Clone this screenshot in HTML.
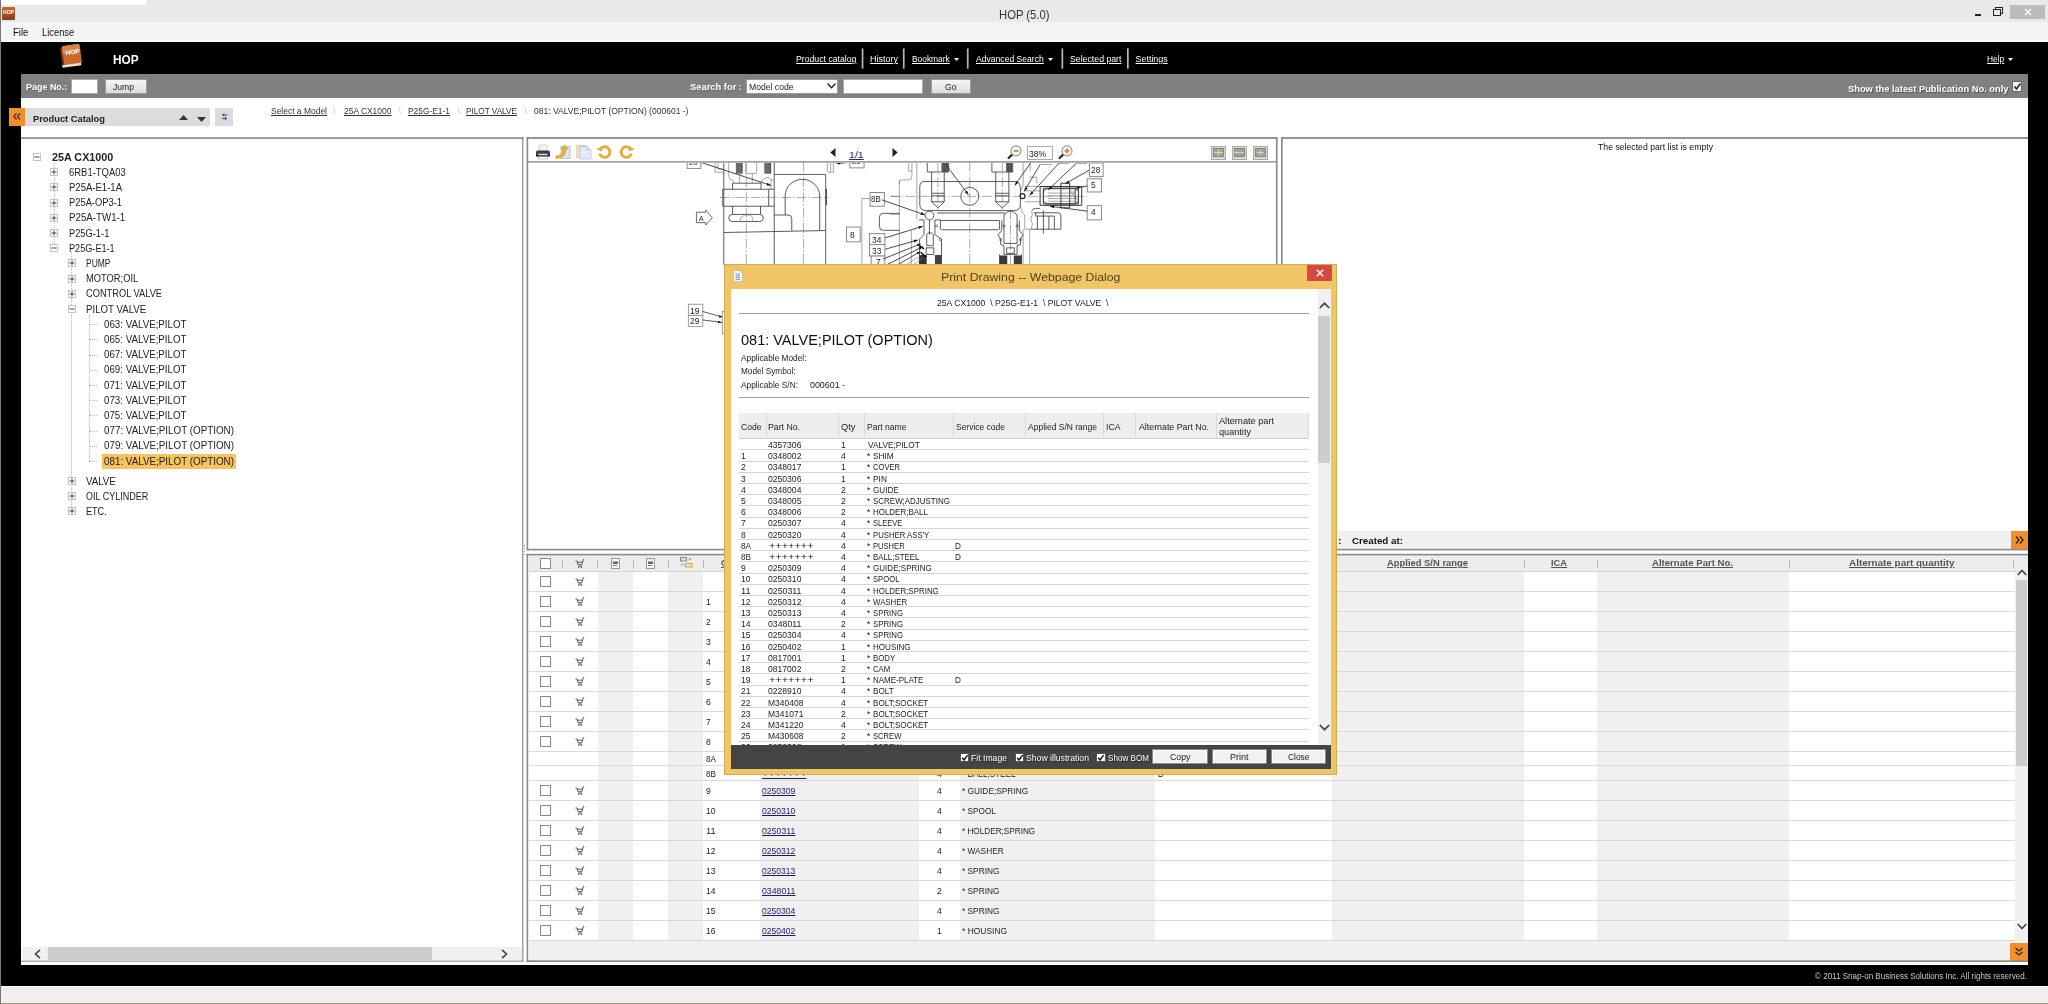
<!DOCTYPE html>
<html><head><meta charset="utf-8"><title>HOP (5.0)</title>
<style>
html,body{margin:0;padding:0;}
body{will-change:transform;width:2048px;height:1004px;position:relative;overflow:hidden;background:#000;font-family:"Liberation Sans",sans-serif;font-size:10px;color:#222;}
div{position:absolute;box-sizing:border-box;}
.t{position:absolute;white-space:nowrap;display:block;transform-origin:0 0;}
svg{position:absolute;overflow:visible;}
</style></head><body>

<div style="left:0px;top:0px;width:2048px;height:23px;background:#e9e9e9;"></div>
<div style="left:0px;top:0px;width:146px;height:5px;background:#fff;"></div>
<div style="left:0px;top:22px;width:2048px;height:1px;background:#f4f4f4;"></div>
<div style="left:0px;top:23px;width:2048px;height:19px;background:#f5f5f5;"></div>
<div style="left:0px;top:41px;width:2048px;height:1.4px;background:#fff;"></div>
<div style="left:0px;top:42px;width:2048px;height:944px;background:#000;"></div>
<div style="left:0px;top:985.5px;width:2048px;height:18px;background:#efefef;"></div>
<div style="left:0px;top:985.5px;width:2048px;height:1.3px;background:#fff;"></div>
<div style="left:0px;top:1003px;width:2048px;height:1px;background:#a89a6c;"></div>
<div style="left:0px;top:0px;width:1px;height:1004px;background:#777;"></div>
<span class="t" style="left:999.3px;top:6px;font-size:13px;line-height:17px;color:#333;transform:scaleX(0.8665);">HOP (5.0)</span>
<div style="left:2px;top:7px;width:13px;height:13px;background:linear-gradient(#c8672a,#8a3c14);border-radius:1px;"></div>
<span class="t" style="left:3px;top:8px;font-size:5px;line-height:8px;color:#fff;transform:scaleX(1.0111);font-weight:bold;">HOP</span>
<div style="left:1974.7px;top:13.7px;width:6.3px;height:2px;background:#222;"></div>
<svg style="left:1993px;top:7px" width="11" height="10"><rect x="2.5" y="0.5" width="7" height="6" fill="none" stroke="#222" stroke-width="1"/><rect x="0.5" y="2.5" width="7" height="6" fill="#e9e9e9" stroke="#222" stroke-width="1"/></svg>
<div style="left:2009.7px;top:5px;width:35.8px;height:14.2px;background:#bcbcbc;"></div>
<svg style="left:2024px;top:8px" width="8" height="8"><path d="M1 1 L7 7 M7 1 L1 7" stroke="#fff" stroke-width="1.4"/></svg>
<span class="t" style="left:12.8px;top:26px;font-size:10px;line-height:13px;color:#111;transform:scaleX(0.9557);">File</span>
<span class="t" style="left:42.3px;top:26px;font-size:10px;line-height:13px;color:#111;transform:scaleX(0.9342);">License</span>
<svg style="left:58px;top:43px" width="26" height="27" viewBox="0 0 26 27"><g transform="rotate(-8 13 13)"><rect x="3" y="3" width="19" height="20" rx="2" fill="#5a2a10"/><rect x="5" y="2" width="18" height="20" rx="2" fill="#c9692b"/><rect x="5" y="2" width="18" height="9" rx="2" fill="#d98345"/><rect x="3" y="21" width="19" height="2.5" fill="#e8e0d0"/></g><text x="8" y="11.5" font-size="6.5" font-weight="bold" fill="#fff" font-family="Liberation Sans, sans-serif" transform="rotate(-8 13 13)">HOP</text></svg>
<span class="t" style="left:112.6px;top:52px;font-size:12px;line-height:16px;color:#fff;transform:scaleX(0.9844);font-weight:bold;">HOP</span>
<span class="t nav" style="left:795.5px;top:53px;font-size:8.9px;line-height:12px;color:#fff;transform:scaleX(0.9799);text-decoration:underline;">Product catalog</span>
<span class="t nav" style="left:869.8px;top:53px;font-size:8.9px;line-height:12px;color:#fff;transform:scaleX(1.0111);text-decoration:underline;">History</span>
<span class="t nav" style="left:911.5px;top:53px;font-size:8.9px;line-height:12px;color:#fff;transform:scaleX(0.9435);text-decoration:underline;">Bookmark</span>
<span class="t nav" style="left:975.8px;top:53px;font-size:8.9px;line-height:12px;color:#fff;transform:scaleX(0.9678);text-decoration:underline;">Advanced Search</span>
<span class="t nav" style="left:1070.3px;top:53px;font-size:8.9px;line-height:12px;color:#fff;transform:scaleX(0.9839);text-decoration:underline;">Selected part</span>
<span class="t nav" style="left:1135.6px;top:53px;font-size:8.9px;line-height:12px;color:#fff;text-decoration:underline;">Settings</span>
<span class="t nav" style="left:1986.5px;top:53px;font-size:8.9px;line-height:12px;color:#fff;transform:scaleX(0.9396);text-decoration:underline;">Help</span>
<svg style="left:953.8px;top:57.5px" width="5" height="3"><path d="M0 0 H5 L2.5 3 Z" fill="#fff"/></svg>
<svg style="left:1047.5px;top:57.5px" width="5" height="3"><path d="M0 0 H5 L2.5 3 Z" fill="#fff"/></svg>
<svg style="left:2008px;top:57.5px" width="5" height="3"><path d="M0 0 H5 L2.5 3 Z" fill="#fff"/></svg>
<div style="left:21px;top:74px;width:2007px;height:24px;background:#808080;"></div>
<span class="t" style="left:26.3px;top:80px;font-size:9.6px;line-height:13px;color:#fff;transform:scaleX(0.9328);font-weight:bold;text-shadow:1px 1px 0 #666;">Page No.:</span>
<div style="left:70.5px;top:78.5px;width:27.5px;height:15.5px;background:#fff;border:1px solid #aaa;"></div>
<div style="left:105px;top:79px;width:41.5px;height:15px;background:linear-gradient(#f6f6f6,#dcdcdc);border:1px solid #9a9a9a;"></div>
<span class="t" style="left:113.3px;top:81px;font-size:9.2px;line-height:12px;color:#222;transform:scaleX(0.9334);">Jump</span>
<span class="t" style="left:689.8px;top:80px;font-size:9.8px;line-height:13px;color:#fff;transform:scaleX(0.9548);font-weight:bold;text-shadow:1px 1px 0 #666;">Search for :</span>
<div style="left:745.7px;top:79px;width:92.5px;height:14.7px;background:#fff;border:1px solid #999;"></div>
<span class="t" style="left:748.8px;top:81px;font-size:9.2px;line-height:12px;color:#222;transform:scaleX(0.9377);">Model code</span>
<svg style="left:827px;top:83px" width="9" height="6"><path d="M0.5 0.5 L4.5 4.8 L8.5 0.5" fill="none" stroke="#222" stroke-width="1.3"/></svg>
<div style="left:843px;top:79px;width:79.5px;height:14.7px;background:#fff;border:1px solid #aaa;"></div>
<div style="left:930.8px;top:79.3px;width:40.5px;height:14.4px;background:linear-gradient(#f6f6f6,#dcdcdc);border:1px solid #9a9a9a;"></div>
<span class="t" style="left:945.3px;top:81px;font-size:9.2px;line-height:12px;color:#222;transform:scaleX(0.937);">Go</span>
<span class="t" style="left:1848.3px;top:82px;font-size:9.5px;line-height:13px;color:#fff;transform:scaleX(0.9809);font-weight:bold;text-shadow:1px 1px 0 #555;">Show the latest Publication No. only</span>
<div style="left:2011.5px;top:81px;width:10.5px;height:10.5px;background:#f4f4f4;border:1px solid #666;"></div>
<svg style="left:2012.5px;top:82px" width="9" height="9"><path d="M1.5 4.5 L3.5 7 L7.5 1.5" fill="none" stroke="#222" stroke-width="1.5"/></svg>
<div style="left:21px;top:98px;width:2007px;height:867px;background:#fff;"></div>
<div style="left:24px;top:108px;width:186px;height:18px;background:#dcdcdc;"></div>
<div style="left:9px;top:108px;width:15.5px;height:18px;background:#f28f2c;"></div>
<svg style="left:13.3px;top:113px" width="8" height="7" viewBox="0 0 9 8"><path d="M4 0.5 L1 4 L4 7.5 M8 0.5 L5 4 L8 7.5" fill="none" stroke="#222" stroke-width="1.3"/></svg>
<span class="t" style="left:32.6px;top:112px;font-size:9.6px;line-height:13px;color:#222;transform:scaleX(0.9711);font-weight:bold;">Product Catalog</span>
<svg style="left:179px;top:115px" width="9" height="5"><path d="M0 5 H9 L4.5 0 Z" fill="#333"/></svg>
<svg style="left:196.5px;top:117px" width="9" height="5"><path d="M0 0 H9 L4.5 5 Z" fill="#333"/></svg>
<div style="left:215px;top:108px;width:18px;height:18px;background:#dcdcdc;"></div>
<svg style="left:220.8px;top:113px" width="7.2" height="8" viewBox="0 0 9 10"><path d="M8 2.5 H2 M2 2.5 L4 0.5 M2 2.5 L4 4.5 M1 7 H7 M7 7 L5 5 M7 7 L5 9" fill="none" stroke="#2a3a8a" stroke-width="1.2"/></svg>
<span class="t bc" style="left:270.6px;top:105px;font-size:8.8px;line-height:12px;color:#333;transform:scaleX(0.962);text-decoration:underline;">Select a Model</span>
<span class="t bc" style="left:343.8px;top:105px;font-size:8.8px;line-height:12px;color:#333;transform:scaleX(0.9591);text-decoration:underline;">25A CX1000</span>
<span class="t bc" style="left:407.8px;top:105px;font-size:8.8px;line-height:12px;color:#333;transform:scaleX(0.954);text-decoration:underline;">P25G-E1-1</span>
<span class="t bc" style="left:466.3px;top:105px;font-size:8.8px;line-height:12px;color:#333;transform:scaleX(0.9309);text-decoration:underline;">PILOT VALVE</span>
<span class="t bc" style="left:533.8px;top:105px;font-size:8.8px;line-height:12px;color:#333;transform:scaleX(0.969);">081: VALVE;PILOT (OPTION) (000601 -)</span>
<span class="t" style="left:333px;top:105px;font-size:8.8px;line-height:12px;color:#d9c88e;letter-spacing:0.917px;">\</span>
<span class="t" style="left:398.5px;top:105px;font-size:8.8px;line-height:12px;color:#d9c88e;letter-spacing:0.917px;">\</span>
<span class="t" style="left:457.5px;top:105px;font-size:8.8px;line-height:12px;color:#d9c88e;letter-spacing:0.917px;">\</span>
<span class="t" style="left:524.5px;top:105px;font-size:8.8px;line-height:12px;color:#d9c88e;letter-spacing:0.917px;">\</span>
<div style="left:524px;top:544.5px;width:1px;height:1.2px;background:#999;"></div>
<div style="left:524px;top:547.5px;width:1px;height:1.2px;background:#999;"></div>
<div style="left:524px;top:550.5px;width:1px;height:1.2px;background:#999;"></div>
<div style="left:524px;top:553.5px;width:1px;height:1.2px;background:#999;"></div>
<div style="left:53.5px;top:163px;width:1px;height:85.19999999999993px;border-left:1px dotted #bbb;"></div>
<div style="left:71.2px;top:252.19999999999993px;width:1px;height:259.1999999999998px;border-left:1px dotted #bbb;"></div>
<div style="left:88.7px;top:314.9999999999999px;width:1px;height:145.9999999999999px;border-left:1px dotted #bbb;"></div>
<svg style="left:32.5px;top:153.0px" width="8" height="8"><rect x="0.5" y="0.5" width="7" height="7" fill="#fff" stroke="#c2c2c2" stroke-width="1"/><path d="M1.5 4 H6.5" stroke="#333" stroke-width="0.9"/></svg>
<span class="t" style="left:51.6px;top:151px;font-size:10px;line-height:13px;color:#222;transform:scaleX(1.0775);font-weight:bold;">25A CX1000</span>
<svg style="left:50px;top:168.2px" width="8" height="8"><rect x="0.5" y="0.5" width="7" height="7" fill="#fff" stroke="#c2c2c2" stroke-width="1"/><path d="M1.5 4 H6.5 M4 1.5 V6.5" stroke="#333" stroke-width="0.9"/></svg>
<span class="t" style="left:68.6px;top:166px;font-size:10px;line-height:13px;color:#222;transform:scaleX(0.9446);">6RB1-TQA03</span>
<svg style="left:50px;top:183.4px" width="8" height="8"><rect x="0.5" y="0.5" width="7" height="7" fill="#fff" stroke="#c2c2c2" stroke-width="1"/><path d="M1.5 4 H6.5 M4 1.5 V6.5" stroke="#333" stroke-width="0.9"/></svg>
<span class="t" style="left:68.6px;top:181px;font-size:10px;line-height:13px;color:#222;transform:scaleX(0.9534);">P25A-E1-1A</span>
<svg style="left:50px;top:198.6px" width="8" height="8"><rect x="0.5" y="0.5" width="7" height="7" fill="#fff" stroke="#c2c2c2" stroke-width="1"/><path d="M1.5 4 H6.5 M4 1.5 V6.5" stroke="#333" stroke-width="0.9"/></svg>
<span class="t" style="left:68.6px;top:196px;font-size:10px;line-height:13px;color:#222;transform:scaleX(0.9348);">P25A-OP3-1</span>
<svg style="left:50px;top:213.8px" width="8" height="8"><rect x="0.5" y="0.5" width="7" height="7" fill="#fff" stroke="#c2c2c2" stroke-width="1"/><path d="M1.5 4 H6.5 M4 1.5 V6.5" stroke="#333" stroke-width="0.9"/></svg>
<span class="t" style="left:68.6px;top:211px;font-size:10px;line-height:13px;color:#222;transform:scaleX(0.9724);">P25A-TW1-1</span>
<svg style="left:50px;top:229.0px" width="8" height="8"><rect x="0.5" y="0.5" width="7" height="7" fill="#fff" stroke="#c2c2c2" stroke-width="1"/><path d="M1.5 4 H6.5 M4 1.5 V6.5" stroke="#333" stroke-width="0.9"/></svg>
<span class="t" style="left:68.6px;top:227px;font-size:10px;line-height:13px;color:#222;transform:scaleX(0.9295);">P25G-1-1</span>
<svg style="left:50px;top:244.2px" width="8" height="8"><rect x="0.5" y="0.5" width="7" height="7" fill="#fff" stroke="#c2c2c2" stroke-width="1"/><path d="M1.5 4 H6.5" stroke="#333" stroke-width="0.9"/></svg>
<span class="t" style="left:68.6px;top:242px;font-size:10px;line-height:13px;color:#222;transform:scaleX(0.9135);">P25G-E1-1</span>
<svg style="left:67.7px;top:259.4px" width="8" height="8"><rect x="0.5" y="0.5" width="7" height="7" fill="#fff" stroke="#c2c2c2" stroke-width="1"/><path d="M1.5 4 H6.5 M4 1.5 V6.5" stroke="#333" stroke-width="0.9"/></svg>
<span class="t" style="left:86.3px;top:257px;font-size:10px;line-height:13px;color:#222;transform:scaleX(0.848);">PUMP</span>
<svg style="left:67.7px;top:274.6px" width="8" height="8"><rect x="0.5" y="0.5" width="7" height="7" fill="#fff" stroke="#c2c2c2" stroke-width="1"/><path d="M1.5 4 H6.5 M4 1.5 V6.5" stroke="#333" stroke-width="0.9"/></svg>
<span class="t" style="left:86.3px;top:272px;font-size:10px;line-height:13px;color:#222;transform:scaleX(0.9333);">MOTOR;OIL</span>
<svg style="left:67.7px;top:289.8px" width="8" height="8"><rect x="0.5" y="0.5" width="7" height="7" fill="#fff" stroke="#c2c2c2" stroke-width="1"/><path d="M1.5 4 H6.5 M4 1.5 V6.5" stroke="#333" stroke-width="0.9"/></svg>
<span class="t" style="left:86.3px;top:287px;font-size:10px;line-height:13px;color:#222;transform:scaleX(0.9262);">CONTROL VALVE</span>
<svg style="left:67.7px;top:305.0px" width="8" height="8"><rect x="0.5" y="0.5" width="7" height="7" fill="#fff" stroke="#c2c2c2" stroke-width="1"/><path d="M1.5 4 H6.5" stroke="#333" stroke-width="0.9"/></svg>
<span class="t" style="left:86.3px;top:303px;font-size:10px;line-height:13px;color:#222;transform:scaleX(0.967);">PILOT VALVE</span>
<div style="left:89px;top:324.2px;width:7.5px;height:1px;border-top:1px dotted #bbb;"></div>
<span class="t" style="left:104.3px;top:318px;font-size:10px;line-height:13px;color:#222;transform:scaleX(0.9743);">063: VALVE;PILOT</span>
<div style="left:89px;top:339.4px;width:7.5px;height:1px;border-top:1px dotted #bbb;"></div>
<span class="t" style="left:104.3px;top:333px;font-size:10px;line-height:13px;color:#222;transform:scaleX(0.9743);">065: VALVE;PILOT</span>
<div style="left:89px;top:354.6px;width:7.5px;height:1px;border-top:1px dotted #bbb;"></div>
<span class="t" style="left:104.3px;top:348px;font-size:10px;line-height:13px;color:#222;transform:scaleX(0.9743);">067: VALVE;PILOT</span>
<div style="left:89px;top:369.8px;width:7.5px;height:1px;border-top:1px dotted #bbb;"></div>
<span class="t" style="left:104.3px;top:363px;font-size:10px;line-height:13px;color:#222;transform:scaleX(0.9743);">069: VALVE;PILOT</span>
<div style="left:89px;top:385.0px;width:7.5px;height:1px;border-top:1px dotted #bbb;"></div>
<span class="t" style="left:104.3px;top:379px;font-size:10px;line-height:13px;color:#222;transform:scaleX(0.9743);">071: VALVE;PILOT</span>
<div style="left:89px;top:400.2px;width:7.5px;height:1px;border-top:1px dotted #bbb;"></div>
<span class="t" style="left:104.3px;top:394px;font-size:10px;line-height:13px;color:#222;transform:scaleX(0.9743);">073: VALVE;PILOT</span>
<div style="left:89px;top:415.4px;width:7.5px;height:1px;border-top:1px dotted #bbb;"></div>
<span class="t" style="left:104.3px;top:409px;font-size:10px;line-height:13px;color:#222;transform:scaleX(0.9743);">075: VALVE;PILOT</span>
<div style="left:89px;top:430.6px;width:7.5px;height:1px;border-top:1px dotted #bbb;"></div>
<span class="t" style="left:104.3px;top:424px;font-size:10px;line-height:13px;color:#222;transform:scaleX(0.9828);">077: VALVE;PILOT (OPTION)</span>
<div style="left:89px;top:445.8px;width:7.5px;height:1px;border-top:1px dotted #bbb;"></div>
<span class="t" style="left:104.3px;top:439px;font-size:10px;line-height:13px;color:#222;transform:scaleX(0.9828);">079: VALVE;PILOT (OPTION)</span>
<div style="left:102.4px;top:454px;width:133.6px;height:14.5px;background:#f6c35f;"></div>
<div style="left:89px;top:461.0px;width:7.5px;height:1px;border-top:1px dotted #bbb;"></div>
<span class="t" style="left:104.3px;top:455px;font-size:10px;line-height:13px;color:#222;transform:scaleX(0.9828);">081: VALVE;PILOT (OPTION)</span>
<svg style="left:67.7px;top:477.0px" width="8" height="8"><rect x="0.5" y="0.5" width="7" height="7" fill="#fff" stroke="#c2c2c2" stroke-width="1"/><path d="M1.5 4 H6.5 M4 1.5 V6.5" stroke="#333" stroke-width="0.9"/></svg>
<span class="t" style="left:86.3px;top:475px;font-size:10px;line-height:13px;color:#222;transform:scaleX(0.9688);">VALVE</span>
<svg style="left:67.7px;top:492.2px" width="8" height="8"><rect x="0.5" y="0.5" width="7" height="7" fill="#fff" stroke="#c2c2c2" stroke-width="1"/><path d="M1.5 4 H6.5 M4 1.5 V6.5" stroke="#333" stroke-width="0.9"/></svg>
<span class="t" style="left:86.3px;top:490px;font-size:10px;line-height:13px;color:#222;transform:scaleX(0.9031);">OIL CYLINDER</span>
<svg style="left:67.7px;top:507.4px" width="8" height="8"><rect x="0.5" y="0.5" width="7" height="7" fill="#fff" stroke="#c2c2c2" stroke-width="1"/><path d="M1.5 4 H6.5 M4 1.5 V6.5" stroke="#333" stroke-width="0.9"/></svg>
<span class="t" style="left:86.3px;top:505px;font-size:10px;line-height:13px;color:#222;transform:scaleX(0.9087);">ETC.</span>
<div style="left:22px;top:946.5px;width:500px;height:13.5px;background:#f0f0f0;"></div>
<div style="left:48px;top:947px;width:384px;height:12.5px;background:#cdcdcd;"></div>
<svg style="left:34px;top:948.5px" width="7" height="10"><path d="M6 0.8 L1.5 5 L6 9.2" fill="none" stroke="#444" stroke-width="1.6"/></svg>
<svg style="left:501px;top:948.5px" width="7" height="10"><path d="M1 0.8 L5.5 5 L1 9.2" fill="none" stroke="#444" stroke-width="1.6"/></svg>
<div style="left:1283px;top:531px;width:745px;height:18px;background:#f0f0f0;"></div>
<span class="t" style="left:1337.6px;top:534px;font-size:9.7px;line-height:13px;color:#111;transform:scaleX(1.0899);font-weight:bold;">:</span>
<span class="t" style="left:1351.7px;top:534px;font-size:9.7px;line-height:13px;color:#111;transform:scaleX(1.0065);font-weight:bold;">Created at:</span>
<div style="left:2010.5px;top:531px;width:17.5px;height:18px;background:#f28f2c;"></div>
<svg style="left:2015px;top:536px" width="9" height="8"><path d="M1 0.5 L4 4 L1 7.5 M5 0.5 L8 4 L5 7.5" fill="none" stroke="#222" stroke-width="1.2"/></svg>
<span class="t" style="left:1598px;top:141px;font-size:9px;line-height:12px;color:#111;transform:scaleX(0.966);">The selected part list is empty</span>
<div style="left:524px;top:128px;width:1px;height:1px;"></div>
<div style="left:526.5px;top:553.8px;width:1501.5px;height:408.2px;background:#fff;"></div>
<div style="left:529px;top:555.8px;width:1499px;height:15.7px;background:#ececec;"></div>
<div style="left:528.5px;top:571px;width:1499.5px;height:1px;background:#d4d4d4;"></div>
<div style="left:597.5px;top:571.5px;width:35.5px;height:369.0px;background:#f0f0f0;"></div>
<div style="left:668px;top:571.5px;width:35px;height:369.0px;background:#f0f0f0;"></div>
<div style="left:760px;top:571.5px;width:159.29999999999995px;height:369.0px;background:#f0f0f0;"></div>
<div style="left:959.5px;top:571.5px;width:195.5px;height:369.0px;background:#f0f0f0;"></div>
<div style="left:1332px;top:571.5px;width:192px;height:369.0px;background:#f0f0f0;"></div>
<div style="left:1597px;top:571.5px;width:192px;height:369.0px;background:#f0f0f0;"></div>
<div style="left:528.5px;top:590.8px;width:1486.5px;height:1px;background:#dadada;"></div>
<div style="left:528.5px;top:610.8px;width:1486.5px;height:1px;background:#dadada;"></div>
<div style="left:528.5px;top:630.8px;width:1486.5px;height:1px;background:#dadada;"></div>
<div style="left:528.5px;top:650.8px;width:1486.5px;height:1px;background:#dadada;"></div>
<div style="left:528.5px;top:670.8px;width:1486.5px;height:1px;background:#dadada;"></div>
<div style="left:528.5px;top:690.8px;width:1486.5px;height:1px;background:#dadada;"></div>
<div style="left:528.5px;top:710.8px;width:1486.5px;height:1px;background:#dadada;"></div>
<div style="left:528.5px;top:730.8px;width:1486.5px;height:1px;background:#dadada;"></div>
<div style="left:528.5px;top:750.8px;width:1486.5px;height:1px;background:#dadada;"></div>
<div style="left:528.5px;top:765.3px;width:1486.5px;height:1px;background:#dadada;"></div>
<div style="left:528.5px;top:779.8px;width:1486.5px;height:1px;background:#dadada;"></div>
<div style="left:528.5px;top:799.8px;width:1486.5px;height:1px;background:#dadada;"></div>
<div style="left:528.5px;top:819.8px;width:1486.5px;height:1px;background:#dadada;"></div>
<div style="left:528.5px;top:839.8px;width:1486.5px;height:1px;background:#dadada;"></div>
<div style="left:528.5px;top:859.8px;width:1486.5px;height:1px;background:#dadada;"></div>
<div style="left:528.5px;top:879.8px;width:1486.5px;height:1px;background:#dadada;"></div>
<div style="left:528.5px;top:899.8px;width:1486.5px;height:1px;background:#dadada;"></div>
<div style="left:528.5px;top:919.8px;width:1486.5px;height:1px;background:#dadada;"></div>
<div style="left:528.5px;top:939.8px;width:1486.5px;height:1px;background:#dadada;"></div>
<div style="left:528.5px;top:940.5px;width:1499.5px;height:20px;background:#f0f0f0;"></div>
<div style="left:561.5px;top:559.5px;width:1px;height:8px;background:#b8b8b8;"></div>
<div style="left:597.0px;top:559.5px;width:1px;height:8px;background:#b8b8b8;"></div>
<div style="left:632.5px;top:559.5px;width:1px;height:8px;background:#b8b8b8;"></div>
<div style="left:667.5px;top:559.5px;width:1px;height:8px;background:#b8b8b8;"></div>
<div style="left:702.5px;top:559.5px;width:1px;height:8px;background:#b8b8b8;"></div>
<div style="left:1331.5px;top:559.5px;width:1px;height:8px;background:#b8b8b8;"></div>
<div style="left:1523.5px;top:559.5px;width:1px;height:8px;background:#b8b8b8;"></div>
<div style="left:1596.5px;top:559.5px;width:1px;height:8px;background:#b8b8b8;"></div>
<div style="left:1788.5px;top:559.5px;width:1px;height:8px;background:#b8b8b8;"></div>
<div style="left:2012.5px;top:559.5px;width:1px;height:8px;background:#b8b8b8;"></div>
<div style="left:540px;top:558px;width:11px;height:11px;background:#fff;border:1px solid #8a8a8a;"></div>
<svg style="left:574.8px;top:558.6px" width="9.4" height="9.6" viewBox="0 0 11 11"><path d="M0.5 2.2 H2.2 L3.6 6.6 H8 L9.6 0.6 H10.8 M2.6 3.6 H8.6 M3.9 8.2 H8.3" fill="none" stroke="#555" stroke-width="1.15"/><circle cx="4.4" cy="9.6" r="0.9" fill="#555"/><circle cx="7.7" cy="9.6" r="0.9" fill="#555"/></svg>
<svg style="left:610.5px;top:557.5px" width="9" height="11"><rect x="0.5" y="0.5" width="8" height="10" fill="#f4f4f4" stroke="#999"/><rect x="2" y="3.5" width="5" height="2.5" fill="#666"/><path d="M2 7.5 H6" stroke="#777"/></svg>
<svg style="left:646px;top:557.5px" width="9" height="11"><rect x="0.5" y="0.5" width="8" height="10" fill="#f4f4f4" stroke="#999"/><rect x="2" y="3.5" width="5" height="2.5" fill="#666"/><path d="M2 7.5 H6" stroke="#777"/></svg>
<svg style="left:680px;top:557px" width="13" height="11"><rect x="0.5" y="0.5" width="6" height="3.5" fill="#ddd" stroke="#888"/><path d="M8.5 1.5 h3 l-1.5 2 z" fill="#888"/><rect x="5.5" y="6.5" width="6.5" height="3.5" fill="#fde9b0" stroke="#e0a030"/><path d="M1 8.5 l1.5 -2 l1.5 2" fill="none" stroke="#999"/></svg>
<span class="t" style="left:720.5px;top:556px;font-size:9.5px;line-height:13px;color:#555;transform:scaleX(0.9263);font-weight:bold;text-decoration:underline;">Code</span>
<span class="t" style="left:820.5px;top:556px;font-size:9.5px;line-height:13px;color:#555;transform:scaleX(1.0433);font-weight:bold;text-decoration:underline;">Part No.</span>
<span class="t" style="left:931.9px;top:556px;font-size:9.5px;line-height:13px;color:#555;transform:scaleX(0.9472);font-weight:bold;text-decoration:underline;">Qty</span>
<span class="t" style="left:1033.5px;top:556px;font-size:9.5px;line-height:13px;color:#555;transform:scaleX(1.0231);font-weight:bold;text-decoration:underline;">Part name</span>
<span class="t" style="left:1213.5px;top:556px;font-size:9.5px;line-height:13px;color:#555;transform:scaleX(1.0235);font-weight:bold;text-decoration:underline;">Service code</span>
<span class="t" style="left:1386.7px;top:556px;font-size:9.5px;line-height:13px;color:#555;transform:scaleX(0.99);font-weight:bold;text-decoration:underline;">Applied S/N range</span>
<span class="t" style="left:1551.3px;top:556px;font-size:9.5px;line-height:13px;color:#555;transform:scaleX(0.9779);font-weight:bold;text-decoration:underline;">ICA</span>
<span class="t" style="left:1651.8px;top:556px;font-size:9.5px;line-height:13px;color:#555;transform:scaleX(1.0095);font-weight:bold;text-decoration:underline;">Alternate Part No.</span>
<span class="t" style="left:1848.5px;top:556px;font-size:9.5px;line-height:13px;color:#555;transform:scaleX(1.041);font-weight:bold;text-decoration:underline;">Alternate part quantity</span>
<div style="left:540px;top:576.2px;width:11px;height:11px;background:#fff;border:1px solid #8a8a8a;"></div>
<svg style="left:574.8px;top:576.9px" width="9.4" height="9.6" viewBox="0 0 11 11"><path d="M0.5 2.2 H2.2 L3.6 6.6 H8 L9.6 0.6 H10.8 M2.6 3.6 H8.6 M3.9 8.2 H8.3" fill="none" stroke="#555" stroke-width="1.15"/><circle cx="4.4" cy="9.6" r="0.9" fill="#555"/><circle cx="7.7" cy="9.6" r="0.9" fill="#555"/></svg>
<span class="t" style="left:761.7px;top:576px;font-size:9.2px;line-height:12px;color:#1c1c64;transform:scaleX(0.9326);text-decoration:underline;">4357306</span>
<span class="t" style="left:937px;top:576px;font-size:9.2px;line-height:12px;color:#222;transform:scaleX(0.9326);">1</span>
<span class="t" style="left:962px;top:576px;font-size:9.2px;line-height:12px;color:#222;transform:scaleX(0.9009);">VALVE;PILOT</span>
<div style="left:540px;top:596.2px;width:11px;height:11px;background:#fff;border:1px solid #8a8a8a;"></div>
<svg style="left:574.8px;top:596.9px" width="9.4" height="9.6" viewBox="0 0 11 11"><path d="M0.5 2.2 H2.2 L3.6 6.6 H8 L9.6 0.6 H10.8 M2.6 3.6 H8.6 M3.9 8.2 H8.3" fill="none" stroke="#555" stroke-width="1.15"/><circle cx="4.4" cy="9.6" r="0.9" fill="#555"/><circle cx="7.7" cy="9.6" r="0.9" fill="#555"/></svg>
<span class="t" style="left:706px;top:596px;font-size:9.2px;line-height:12px;color:#222;transform:scaleX(0.9326);">1</span>
<span class="t" style="left:761.7px;top:596px;font-size:9.2px;line-height:12px;color:#1c1c64;transform:scaleX(0.9326);text-decoration:underline;">0348002</span>
<span class="t" style="left:937px;top:596px;font-size:9.2px;line-height:12px;color:#222;transform:scaleX(0.9326);">4</span>
<span class="t" style="left:962px;top:596px;font-size:9.2px;line-height:12px;color:#222;transform:scaleX(0.9704);">* SHIM</span>
<div style="left:540px;top:616.2px;width:11px;height:11px;background:#fff;border:1px solid #8a8a8a;"></div>
<svg style="left:574.8px;top:616.9px" width="9.4" height="9.6" viewBox="0 0 11 11"><path d="M0.5 2.2 H2.2 L3.6 6.6 H8 L9.6 0.6 H10.8 M2.6 3.6 H8.6 M3.9 8.2 H8.3" fill="none" stroke="#555" stroke-width="1.15"/><circle cx="4.4" cy="9.6" r="0.9" fill="#555"/><circle cx="7.7" cy="9.6" r="0.9" fill="#555"/></svg>
<span class="t" style="left:706px;top:616px;font-size:9.2px;line-height:12px;color:#222;transform:scaleX(0.9326);">2</span>
<span class="t" style="left:761.7px;top:616px;font-size:9.2px;line-height:12px;color:#1c1c64;transform:scaleX(0.9326);text-decoration:underline;">0348017</span>
<span class="t" style="left:937px;top:616px;font-size:9.2px;line-height:12px;color:#222;transform:scaleX(0.9326);">1</span>
<span class="t" style="left:962px;top:616px;font-size:9.2px;line-height:12px;color:#222;transform:scaleX(0.8879);">* COVER</span>
<div style="left:540px;top:636.2px;width:11px;height:11px;background:#fff;border:1px solid #8a8a8a;"></div>
<svg style="left:574.8px;top:636.9px" width="9.4" height="9.6" viewBox="0 0 11 11"><path d="M0.5 2.2 H2.2 L3.6 6.6 H8 L9.6 0.6 H10.8 M2.6 3.6 H8.6 M3.9 8.2 H8.3" fill="none" stroke="#555" stroke-width="1.15"/><circle cx="4.4" cy="9.6" r="0.9" fill="#555"/><circle cx="7.7" cy="9.6" r="0.9" fill="#555"/></svg>
<span class="t" style="left:706px;top:636px;font-size:9.2px;line-height:12px;color:#222;transform:scaleX(0.9326);">3</span>
<span class="t" style="left:761.7px;top:636px;font-size:9.2px;line-height:12px;color:#1c1c64;transform:scaleX(0.9326);text-decoration:underline;">0250306</span>
<span class="t" style="left:937px;top:636px;font-size:9.2px;line-height:12px;color:#222;transform:scaleX(0.9326);">1</span>
<span class="t" style="left:962px;top:636px;font-size:9.2px;line-height:12px;color:#222;">* PIN</span>
<div style="left:540px;top:656.2px;width:11px;height:11px;background:#fff;border:1px solid #8a8a8a;"></div>
<svg style="left:574.8px;top:656.9px" width="9.4" height="9.6" viewBox="0 0 11 11"><path d="M0.5 2.2 H2.2 L3.6 6.6 H8 L9.6 0.6 H10.8 M2.6 3.6 H8.6 M3.9 8.2 H8.3" fill="none" stroke="#555" stroke-width="1.15"/><circle cx="4.4" cy="9.6" r="0.9" fill="#555"/><circle cx="7.7" cy="9.6" r="0.9" fill="#555"/></svg>
<span class="t" style="left:706px;top:656px;font-size:9.2px;line-height:12px;color:#222;transform:scaleX(0.9326);">4</span>
<span class="t" style="left:761.7px;top:656px;font-size:9.2px;line-height:12px;color:#1c1c64;transform:scaleX(0.9326);text-decoration:underline;">0348004</span>
<span class="t" style="left:937px;top:656px;font-size:9.2px;line-height:12px;color:#222;transform:scaleX(0.9326);">2</span>
<span class="t" style="left:962px;top:656px;font-size:9.2px;line-height:12px;color:#222;transform:scaleX(0.9401);">* GUIDE</span>
<div style="left:540px;top:676.2px;width:11px;height:11px;background:#fff;border:1px solid #8a8a8a;"></div>
<svg style="left:574.8px;top:676.9px" width="9.4" height="9.6" viewBox="0 0 11 11"><path d="M0.5 2.2 H2.2 L3.6 6.6 H8 L9.6 0.6 H10.8 M2.6 3.6 H8.6 M3.9 8.2 H8.3" fill="none" stroke="#555" stroke-width="1.15"/><circle cx="4.4" cy="9.6" r="0.9" fill="#555"/><circle cx="7.7" cy="9.6" r="0.9" fill="#555"/></svg>
<span class="t" style="left:706px;top:676px;font-size:9.2px;line-height:12px;color:#222;transform:scaleX(0.9326);">5</span>
<span class="t" style="left:761.7px;top:676px;font-size:9.2px;line-height:12px;color:#1c1c64;transform:scaleX(0.9326);text-decoration:underline;">0348005</span>
<span class="t" style="left:937px;top:676px;font-size:9.2px;line-height:12px;color:#222;transform:scaleX(0.9326);">2</span>
<span class="t" style="left:962px;top:676px;font-size:9.2px;line-height:12px;color:#222;transform:scaleX(0.889);">* SCREW;ADJUSTING</span>
<div style="left:540px;top:696.2px;width:11px;height:11px;background:#fff;border:1px solid #8a8a8a;"></div>
<svg style="left:574.8px;top:696.9px" width="9.4" height="9.6" viewBox="0 0 11 11"><path d="M0.5 2.2 H2.2 L3.6 6.6 H8 L9.6 0.6 H10.8 M2.6 3.6 H8.6 M3.9 8.2 H8.3" fill="none" stroke="#555" stroke-width="1.15"/><circle cx="4.4" cy="9.6" r="0.9" fill="#555"/><circle cx="7.7" cy="9.6" r="0.9" fill="#555"/></svg>
<span class="t" style="left:706px;top:696px;font-size:9.2px;line-height:12px;color:#222;transform:scaleX(0.9326);">6</span>
<span class="t" style="left:761.7px;top:696px;font-size:9.2px;line-height:12px;color:#1c1c64;transform:scaleX(0.9326);text-decoration:underline;">0348006</span>
<span class="t" style="left:937px;top:696px;font-size:9.2px;line-height:12px;color:#222;transform:scaleX(0.9326);">2</span>
<span class="t" style="left:962px;top:696px;font-size:9.2px;line-height:12px;color:#222;transform:scaleX(0.8972);">* HOLDER;BALL</span>
<div style="left:540px;top:716.2px;width:11px;height:11px;background:#fff;border:1px solid #8a8a8a;"></div>
<svg style="left:574.8px;top:716.9px" width="9.4" height="9.6" viewBox="0 0 11 11"><path d="M0.5 2.2 H2.2 L3.6 6.6 H8 L9.6 0.6 H10.8 M2.6 3.6 H8.6 M3.9 8.2 H8.3" fill="none" stroke="#555" stroke-width="1.15"/><circle cx="4.4" cy="9.6" r="0.9" fill="#555"/><circle cx="7.7" cy="9.6" r="0.9" fill="#555"/></svg>
<span class="t" style="left:706px;top:716px;font-size:9.2px;line-height:12px;color:#222;transform:scaleX(0.9326);">7</span>
<span class="t" style="left:761.7px;top:716px;font-size:9.2px;line-height:12px;color:#1c1c64;transform:scaleX(0.9326);text-decoration:underline;">0250307</span>
<span class="t" style="left:937px;top:716px;font-size:9.2px;line-height:12px;color:#222;transform:scaleX(0.9326);">4</span>
<span class="t" style="left:962px;top:716px;font-size:9.2px;line-height:12px;color:#222;transform:scaleX(0.8741);">* SLEEVE</span>
<div style="left:540px;top:736.2px;width:11px;height:11px;background:#fff;border:1px solid #8a8a8a;"></div>
<svg style="left:574.8px;top:736.9px" width="9.4" height="9.6" viewBox="0 0 11 11"><path d="M0.5 2.2 H2.2 L3.6 6.6 H8 L9.6 0.6 H10.8 M2.6 3.6 H8.6 M3.9 8.2 H8.3" fill="none" stroke="#555" stroke-width="1.15"/><circle cx="4.4" cy="9.6" r="0.9" fill="#555"/><circle cx="7.7" cy="9.6" r="0.9" fill="#555"/></svg>
<span class="t" style="left:706px;top:736px;font-size:9.2px;line-height:12px;color:#222;transform:scaleX(0.9326);">8</span>
<span class="t" style="left:761.7px;top:736px;font-size:9.2px;line-height:12px;color:#1c1c64;transform:scaleX(0.9326);text-decoration:underline;">0250320</span>
<span class="t" style="left:937px;top:736px;font-size:9.2px;line-height:12px;color:#222;transform:scaleX(0.9326);">4</span>
<span class="t" style="left:962px;top:736px;font-size:9.2px;line-height:12px;color:#222;transform:scaleX(0.8753);">* PUSHER ASS&#x27;Y</span>
<span class="t" style="left:706px;top:753px;font-size:9.2px;line-height:12px;color:#222;transform:scaleX(0.89);">8A</span>
<span class="t" style="left:761.7px;top:753px;font-size:9.2px;line-height:12px;color:#1c1c64;transform:scaleX(1.1843);text-decoration:underline;">+++++++</span>
<span class="t" style="left:937px;top:753px;font-size:9.2px;line-height:12px;color:#222;transform:scaleX(0.9326);">4</span>
<span class="t" style="left:962px;top:753px;font-size:9.2px;line-height:12px;color:#222;transform:scaleX(0.8803);">* PUSHER</span>
<span class="t" style="left:706px;top:768px;font-size:9.2px;line-height:12px;color:#222;transform:scaleX(0.8815);">8B</span>
<span class="t" style="left:761.7px;top:768px;font-size:9.2px;line-height:12px;color:#1c1c64;transform:scaleX(1.1843);text-decoration:underline;">+++++++</span>
<span class="t" style="left:937px;top:768px;font-size:9.2px;line-height:12px;color:#222;transform:scaleX(0.9326);">4</span>
<span class="t" style="left:962px;top:768px;font-size:9.2px;line-height:12px;color:#222;transform:scaleX(0.892);">* BALL;STEEL</span>
<div style="left:540px;top:785.2px;width:11px;height:11px;background:#fff;border:1px solid #8a8a8a;"></div>
<svg style="left:574.8px;top:785.9px" width="9.4" height="9.6" viewBox="0 0 11 11"><path d="M0.5 2.2 H2.2 L3.6 6.6 H8 L9.6 0.6 H10.8 M2.6 3.6 H8.6 M3.9 8.2 H8.3" fill="none" stroke="#555" stroke-width="1.15"/><circle cx="4.4" cy="9.6" r="0.9" fill="#555"/><circle cx="7.7" cy="9.6" r="0.9" fill="#555"/></svg>
<span class="t" style="left:706px;top:785px;font-size:9.2px;line-height:12px;color:#222;transform:scaleX(0.9326);">9</span>
<span class="t" style="left:761.7px;top:785px;font-size:9.2px;line-height:12px;color:#1c1c64;transform:scaleX(0.9326);text-decoration:underline;">0250309</span>
<span class="t" style="left:937px;top:785px;font-size:9.2px;line-height:12px;color:#222;transform:scaleX(0.9326);">4</span>
<span class="t" style="left:962px;top:785px;font-size:9.2px;line-height:12px;color:#222;transform:scaleX(0.9067);">* GUIDE;SPRING</span>
<div style="left:540px;top:805.2px;width:11px;height:11px;background:#fff;border:1px solid #8a8a8a;"></div>
<svg style="left:574.8px;top:805.9px" width="9.4" height="9.6" viewBox="0 0 11 11"><path d="M0.5 2.2 H2.2 L3.6 6.6 H8 L9.6 0.6 H10.8 M2.6 3.6 H8.6 M3.9 8.2 H8.3" fill="none" stroke="#555" stroke-width="1.15"/><circle cx="4.4" cy="9.6" r="0.9" fill="#555"/><circle cx="7.7" cy="9.6" r="0.9" fill="#555"/></svg>
<span class="t" style="left:706px;top:805px;font-size:9.2px;line-height:12px;color:#222;transform:scaleX(0.9326);">10</span>
<span class="t" style="left:761.7px;top:805px;font-size:9.2px;line-height:12px;color:#1c1c64;transform:scaleX(0.9326);text-decoration:underline;">0250310</span>
<span class="t" style="left:937px;top:805px;font-size:9.2px;line-height:12px;color:#222;transform:scaleX(0.9326);">4</span>
<span class="t" style="left:962px;top:805px;font-size:9.2px;line-height:12px;color:#222;transform:scaleX(0.8965);">* SPOOL</span>
<div style="left:540px;top:825.2px;width:11px;height:11px;background:#fff;border:1px solid #8a8a8a;"></div>
<svg style="left:574.8px;top:825.9px" width="9.4" height="9.6" viewBox="0 0 11 11"><path d="M0.5 2.2 H2.2 L3.6 6.6 H8 L9.6 0.6 H10.8 M2.6 3.6 H8.6 M3.9 8.2 H8.3" fill="none" stroke="#555" stroke-width="1.15"/><circle cx="4.4" cy="9.6" r="0.9" fill="#555"/><circle cx="7.7" cy="9.6" r="0.9" fill="#555"/></svg>
<span class="t" style="left:706px;top:825px;font-size:9.2px;line-height:12px;color:#222;">11</span>
<span class="t" style="left:761.7px;top:825px;font-size:9.2px;line-height:12px;color:#1c1c64;transform:scaleX(0.9508);text-decoration:underline;">0250311</span>
<span class="t" style="left:937px;top:825px;font-size:9.2px;line-height:12px;color:#222;transform:scaleX(0.9326);">4</span>
<span class="t" style="left:962px;top:825px;font-size:9.2px;line-height:12px;color:#222;transform:scaleX(0.8909);">* HOLDER;SPRING</span>
<div style="left:540px;top:845.2px;width:11px;height:11px;background:#fff;border:1px solid #8a8a8a;"></div>
<svg style="left:574.8px;top:845.9px" width="9.4" height="9.6" viewBox="0 0 11 11"><path d="M0.5 2.2 H2.2 L3.6 6.6 H8 L9.6 0.6 H10.8 M2.6 3.6 H8.6 M3.9 8.2 H8.3" fill="none" stroke="#555" stroke-width="1.15"/><circle cx="4.4" cy="9.6" r="0.9" fill="#555"/><circle cx="7.7" cy="9.6" r="0.9" fill="#555"/></svg>
<span class="t" style="left:706px;top:845px;font-size:9.2px;line-height:12px;color:#222;transform:scaleX(0.9326);">12</span>
<span class="t" style="left:761.7px;top:845px;font-size:9.2px;line-height:12px;color:#1c1c64;transform:scaleX(0.9326);text-decoration:underline;">0250312</span>
<span class="t" style="left:937px;top:845px;font-size:9.2px;line-height:12px;color:#222;transform:scaleX(0.9326);">4</span>
<span class="t" style="left:962px;top:845px;font-size:9.2px;line-height:12px;color:#222;transform:scaleX(0.9038);">* WASHER</span>
<div style="left:540px;top:865.2px;width:11px;height:11px;background:#fff;border:1px solid #8a8a8a;"></div>
<svg style="left:574.8px;top:865.9px" width="9.4" height="9.6" viewBox="0 0 11 11"><path d="M0.5 2.2 H2.2 L3.6 6.6 H8 L9.6 0.6 H10.8 M2.6 3.6 H8.6 M3.9 8.2 H8.3" fill="none" stroke="#555" stroke-width="1.15"/><circle cx="4.4" cy="9.6" r="0.9" fill="#555"/><circle cx="7.7" cy="9.6" r="0.9" fill="#555"/></svg>
<span class="t" style="left:706px;top:865px;font-size:9.2px;line-height:12px;color:#222;transform:scaleX(0.9326);">13</span>
<span class="t" style="left:761.7px;top:865px;font-size:9.2px;line-height:12px;color:#1c1c64;transform:scaleX(0.9326);text-decoration:underline;">0250313</span>
<span class="t" style="left:937px;top:865px;font-size:9.2px;line-height:12px;color:#222;transform:scaleX(0.9326);">4</span>
<span class="t" style="left:962px;top:865px;font-size:9.2px;line-height:12px;color:#222;transform:scaleX(0.9065);">* SPRING</span>
<div style="left:540px;top:885.2px;width:11px;height:11px;background:#fff;border:1px solid #8a8a8a;"></div>
<svg style="left:574.8px;top:885.9px" width="9.4" height="9.6" viewBox="0 0 11 11"><path d="M0.5 2.2 H2.2 L3.6 6.6 H8 L9.6 0.6 H10.8 M2.6 3.6 H8.6 M3.9 8.2 H8.3" fill="none" stroke="#555" stroke-width="1.15"/><circle cx="4.4" cy="9.6" r="0.9" fill="#555"/><circle cx="7.7" cy="9.6" r="0.9" fill="#555"/></svg>
<span class="t" style="left:706px;top:885px;font-size:9.2px;line-height:12px;color:#222;transform:scaleX(0.9326);">14</span>
<span class="t" style="left:761.7px;top:885px;font-size:9.2px;line-height:12px;color:#1c1c64;transform:scaleX(0.9508);text-decoration:underline;">0348011</span>
<span class="t" style="left:937px;top:885px;font-size:9.2px;line-height:12px;color:#222;transform:scaleX(0.9326);">2</span>
<span class="t" style="left:962px;top:885px;font-size:9.2px;line-height:12px;color:#222;transform:scaleX(0.9065);">* SPRING</span>
<div style="left:540px;top:905.2px;width:11px;height:11px;background:#fff;border:1px solid #8a8a8a;"></div>
<svg style="left:574.8px;top:905.9px" width="9.4" height="9.6" viewBox="0 0 11 11"><path d="M0.5 2.2 H2.2 L3.6 6.6 H8 L9.6 0.6 H10.8 M2.6 3.6 H8.6 M3.9 8.2 H8.3" fill="none" stroke="#555" stroke-width="1.15"/><circle cx="4.4" cy="9.6" r="0.9" fill="#555"/><circle cx="7.7" cy="9.6" r="0.9" fill="#555"/></svg>
<span class="t" style="left:706px;top:905px;font-size:9.2px;line-height:12px;color:#222;transform:scaleX(0.9326);">15</span>
<span class="t" style="left:761.7px;top:905px;font-size:9.2px;line-height:12px;color:#1c1c64;transform:scaleX(0.9326);text-decoration:underline;">0250304</span>
<span class="t" style="left:937px;top:905px;font-size:9.2px;line-height:12px;color:#222;transform:scaleX(0.9326);">4</span>
<span class="t" style="left:962px;top:905px;font-size:9.2px;line-height:12px;color:#222;transform:scaleX(0.9065);">* SPRING</span>
<div style="left:540px;top:925.2px;width:11px;height:11px;background:#fff;border:1px solid #8a8a8a;"></div>
<svg style="left:574.8px;top:925.9px" width="9.4" height="9.6" viewBox="0 0 11 11"><path d="M0.5 2.2 H2.2 L3.6 6.6 H8 L9.6 0.6 H10.8 M2.6 3.6 H8.6 M3.9 8.2 H8.3" fill="none" stroke="#555" stroke-width="1.15"/><circle cx="4.4" cy="9.6" r="0.9" fill="#555"/><circle cx="7.7" cy="9.6" r="0.9" fill="#555"/></svg>
<span class="t" style="left:706px;top:925px;font-size:9.2px;line-height:12px;color:#222;transform:scaleX(0.9326);">16</span>
<span class="t" style="left:761.7px;top:925px;font-size:9.2px;line-height:12px;color:#1c1c64;transform:scaleX(0.9326);text-decoration:underline;">0250402</span>
<span class="t" style="left:937px;top:925px;font-size:9.2px;line-height:12px;color:#222;transform:scaleX(0.9326);">1</span>
<span class="t" style="left:962px;top:925px;font-size:9.2px;line-height:12px;color:#222;transform:scaleX(0.9194);">* HOUSING</span>
<span class="t" style="left:1157.5px;top:753px;font-size:9.2px;line-height:12px;color:#222;transform:scaleX(0.8919);">D</span>
<span class="t" style="left:1157.5px;top:768px;font-size:9.2px;line-height:12px;color:#222;transform:scaleX(0.8919);">D</span>
<div style="left:2015px;top:571.5px;width:13px;height:369px;background:#f0f0f0;"></div>
<div style="left:2015.7px;top:580px;width:11.5px;height:185.5px;background:#cdcdcd;"></div>
<svg style="left:2016.5px;top:568.5px" width="10" height="7"><path d="M0.8 6 L5 1.5 L9.2 6" fill="none" stroke="#444" stroke-width="1.6"/></svg>
<svg style="left:2016.5px;top:922.5px" width="10" height="7"><path d="M0.8 1 L5 5.5 L9.2 1" fill="none" stroke="#444" stroke-width="1.6"/></svg>
<div style="left:2010px;top:943px;width:18px;height:17.5px;background:#f28f2c;"></div>
<svg style="left:2015px;top:947px" width="8" height="9"><path d="M0.5 1 L4 4 L7.5 1 M0.5 5 L4 8 L7.5 5" fill="none" stroke="#222" stroke-width="1.2"/></svg>
<span class="t" style="left:1815px;top:970px;font-size:8.3px;line-height:12px;color:#c8c8c8;transform:scaleX(0.9695);">© 2011 Snap-on Business Solutions Inc. All rights reserved.</span>
<svg style="left:535px;top:144px" width="16" height="16" viewBox="0 0 16 16"><rect x="4" y="1" width="8" height="6" fill="#f4f4f4" stroke="#bbb" stroke-width="0.6"/><path d="M1 8 Q1 6.5 3 6.5 H13 Q15 6.5 15 8 V12 H1 Z" fill="#3a3f4a"/><rect x="3.5" y="10" width="9" height="5" fill="#fafafa" stroke="#aaa" stroke-width="0.6"/><rect x="1" y="11.3" width="14" height="1.2" fill="#111"/></svg>
<svg style="left:555px;top:144px" width="16" height="16" viewBox="0 0 16 16"><rect x="6" y="2.5" width="9" height="12" fill="#dde6f3" stroke="#9db0cc" stroke-width="0.7"/><path d="M1 12 Q7 12 8 5 L6 5 L9.5 1 L13 5 L11 5 Q11 14.5 1 14.5 Z" fill="#f0b030" stroke="#c88a18" stroke-width="0.5"/></svg>
<svg style="left:576px;top:144px" width="16" height="16" viewBox="0 0 16 16"><rect x="0.8" y="1.5" width="9" height="12" fill="#f3e3c4" stroke="#d9bd8a" stroke-width="0.7"/><path d="M4 2.5 H11 L15 6 V15 H4 Z" fill="#e3ebf6" stroke="#a9b9d2" stroke-width="0.7"/><path d="M11 2.5 V6 H15" fill="none" stroke="#a9b9d2" stroke-width="0.7"/></svg>
<svg style="left:596px;top:143.3px" width="17" height="16" viewBox="0 0 17 16"><path d="M4.0 6.4 A5.3 5.3 0 1 1 3.6 10.8" fill="none" stroke="#e6ab3c" stroke-width="2.8"/><path d="M0.4 6.6 L6.2 3.0 L6.4 8.6 Z" fill="#e6ab3c"/></svg>
<svg style="left:617.5px;top:143.3px" width="17" height="16" viewBox="0 0 17 16"><path d="M13.0 6.4 A5.3 5.3 0 1 0 13.4 10.8" fill="none" stroke="#e6ab3c" stroke-width="2.8"/><path d="M16.6 6.6 L10.8 3.0 L10.6 8.6 Z" fill="#e6ab3c"/></svg>
<svg style="left:830px;top:148px" width="6" height="9"><path d="M5.5 0 V9 L0.3 4.5 Z" fill="#222"/></svg>
<svg style="left:892px;top:148px" width="6" height="9"><path d="M0.5 0 V9 L5.7 4.5 Z" fill="#222"/></svg>
<span class="t" style="left:849px;top:148px;font-size:9.6px;line-height:13px;color:#2a2a5e;transform:scaleX(1.109);text-decoration:underline;">1/1</span>
<svg style="left:1007px;top:144.3px" width="16" height="15" viewBox="0 0 16 15"><path d="M5.4 10.4 L1.6 14" stroke="#2a2a2a" stroke-width="2.2" stroke-linecap="round"/><circle cx="9" cy="6.9" r="5" fill="#fdfdfd" stroke="#8d99ab" stroke-width="1.2"/><path d="M6.5 6.9 H11.5" stroke="#e8862a" stroke-width="1.9"/></svg>
<svg style="left:1057.8px;top:144.3px" width="16" height="15" viewBox="0 0 16 15"><path d="M5.4 10.4 L1.6 14" stroke="#2a2a2a" stroke-width="2.2" stroke-linecap="round"/><circle cx="9" cy="6.9" r="5" fill="#fdfdfd" stroke="#8d99ab" stroke-width="1.2"/><path d="M6.5 6.9 H11.5 M9 4.4 V9.4" stroke="#e8862a" stroke-width="1.9"/></svg>
<div style="left:1026.5px;top:145.5px;width:26.5px;height:14.5px;background:#fff;border:1px solid #aaa;"></div>
<span class="t" style="left:1028.8px;top:147px;font-size:9.6px;line-height:13px;color:#222;transform:scaleX(0.8848);">38%</span>
<svg style="left:1211px;top:145.5px" width="15" height="14" viewBox="0 0 15 14"><rect x="0.5" y="0.5" width="14" height="13" fill="#d8d8d8" stroke="#aaa"/><rect x="2.5" y="2.5" width="10" height="8" fill="#a3a398" stroke="#777" stroke-width="0.8"/><path d="M7.5 3 V10 M3 6.5 H12" stroke="#ddd6b4" stroke-width="1" fill="none"/></svg>
<svg style="left:1231.5px;top:145.5px" width="15" height="14" viewBox="0 0 15 14"><rect x="0.5" y="0.5" width="14" height="13" fill="#d8d8d8" stroke="#aaa"/><rect x="2.5" y="2.5" width="10" height="8" fill="#a3a398" stroke="#777" stroke-width="0.8"/><path d="M3 6.5 H12 M4 5 L3 6.5 L4 8" stroke="#ddd6b4" stroke-width="1" fill="none"/></svg>
<svg style="left:1252.5px;top:145.5px" width="15" height="14" viewBox="0 0 15 14"><rect x="0.5" y="0.5" width="14" height="13" fill="#d8d8d8" stroke="#aaa"/><rect x="2.5" y="2.5" width="10" height="8" fill="#a3a398" stroke="#777" stroke-width="0.8"/><path d="M4 6.5 H11 M7.5 4 V9" stroke="#ddd6b4" stroke-width="1" fill="none"/></svg>
<div style="left:528.5px;top:162.5px;width:747px;height:386px;overflow:hidden;"><div style="left:-528.5px;top:-162.5px;width:2048px;height:1004px;">
<svg style="left:680px;top:158px" width="220" height="110" viewBox="0 0 2008 1004"><path d="M400 35 V975 M860 35 V975 M1330 150 V975 M860 150 H1330 M400 680 L1330 662 M390 285 H860 M390 440 H860 M390 285 V440 M810 285 V440 M480 440 V515 M735 440 V515 M480 230 H740 M480 230 V285 M740 230 V285" stroke="#444" stroke-width="8" fill="none"/><path d="M605 35 V975 M1128 35 V975 M365 360 H1360" stroke="#666" stroke-width="5" fill="none" stroke-dasharray="90 18 14 18"/><rect x="445" y="515" width="315" height="65" rx="32" stroke="#444" stroke-width="8" fill="none"/><path d="M555 545 L590 520 H640 L665 545 M550 580 V545 M660 580 V545" stroke="#777" stroke-width="6" fill="none"/><path d="M960 520 V345 A157 150 0 0 1 1275 345 V662" stroke="#444" stroke-width="8" fill="none"/><path d="M860 520 H985 Q1020 520 1020 555 V662" stroke="#444" stroke-width="8" fill="none"/><path d="M320 35 V130 H400 M345 35 V100 H400 M445 35 V170 Q450 200 485 205 V230 M545 140 V230 M660 140 V230 M700 35 V140 H600 V35 M740 230 Q745 190 790 180 Q820 170 830 200 V285 M860 200 H830" stroke="#777" stroke-width="6" fill="none"/><rect x="510" y="35" width="62" height="108" fill="#555"/><rect x="770" y="35" width="62" height="108" fill="#555"/><path d="M518 35 V143 M530 35 V143 M542 35 V143 M554 35 V143 M778 35 V143 M790 35 V143 M802 35 V143 M814 35 V143" stroke="#999" stroke-width="4"/><path d="M1335 280 V430" stroke="#444" stroke-width="12"/><path d="M1375 40 V130 H1400 V40 M1345 35 V120 Q1350 135 1375 130" stroke="#777" stroke-width="6" fill="none"/><path d="M190 40 L830 250" stroke="#333" stroke-width="8" fill="none"/><path d="M830 250 L790 251 L798 226 Z" fill="#111"/><path d="M1560 38 L1430 52" stroke="#333" stroke-width="8" fill="none"/><path d="M1430 52 L1459 38 L1461 60 Z" fill="#111"/><rect x="65" y="-20" width="125" height="115" fill="#fff" stroke="#888" stroke-width="9"/><rect x="1550" y="-25" width="130" height="115" fill="#fff" stroke="#888" stroke-width="9"/><path d="M150 495 H235 V475 L295 545 L235 612 V590 H150 Z" fill="#fff" stroke="#555" stroke-width="8"/><path d="M1735 370 H1660 V975 M1620 690 H1660" stroke="#777" stroke-width="6" fill="none"/><rect x="1735" y="315" width="130" height="125" fill="#fff" stroke="#888" stroke-width="9"/><rect x="1520" y="630" width="125" height="135" fill="#fff" stroke="#888" stroke-width="9"/><rect x="1730" y="690" width="140" height="100" fill="#fff" stroke="#888" stroke-width="9"/><rect x="1730" y="790" width="140" height="105" fill="#fff" stroke="#888" stroke-width="9"/><rect x="1745" y="895" width="125" height="100" fill="#fff" stroke="#888" stroke-width="9"/><path d="M1925 350 H2008" stroke="#777" stroke-width="6" fill="none"/><path d="M2008 505 H1855 Q1820 505 1820 540 V625 Q1820 660 1855 660 H2008" stroke="#444" stroke-width="8" fill="none"/></svg>
<span class="t" style="left:688.8px;top:157px;font-size:7.9px;line-height:11px;color:#222;transform:scaleX(0.9817);">20</span>
<span class="t" style="left:851.8px;top:156px;font-size:7.9px;line-height:11px;color:#222;transform:scaleX(0.9817);">21</span>
<span class="t" style="left:699.3px;top:213px;font-size:7.7px;line-height:11px;color:#222;transform:scaleX(0.8995);">A</span>
<span class="t" style="left:870.9px;top:193px;font-size:8.5px;line-height:12px;color:#222;transform:scaleX(0.9279);">8B</span>
<span class="t" style="left:850.2px;top:229px;font-size:8.5px;line-height:12px;color:#222;transform:scaleX(0.9817);">8</span>
<span class="t" style="left:872.0px;top:234px;font-size:8.5px;line-height:12px;color:#222;transform:scaleX(0.9817);">34</span>
<span class="t" style="left:872.0px;top:245px;font-size:8.5px;line-height:12px;color:#222;transform:scaleX(0.9817);">33</span>
<span class="t" style="left:876.1px;top:256px;font-size:8.5px;line-height:12px;color:#222;transform:scaleX(0.9817);">7</span>
<svg style="left:890px;top:158px" width="220" height="110" viewBox="0 0 2008 1004"><path d="M85 200 V975 M200 35 V165 Q200 200 165 200 H110 Q85 200 85 235 M170 40 V120 H200 M245 35 V560 M0 515 H85 M195 660 V975" stroke="#777" stroke-width="6" fill="none"/><path d="M310 215 H1140 Q1188 215 1190 270 V430 Q1185 480 1130 480 H330 Q275 480 272 430 V260 Q275 215 310 215 Z" stroke="#444" stroke-width="8" fill="none"/><path d="M430 502 H1050 M460 570 H1000 M470 655 H990 M460 570 V655 M1000 570 V655" stroke="#444" stroke-width="8" fill="none"/><path d="M340 35 V128 H535 V35 M380 128 V400 L437 455 L495 400 V128 M380 322 H495 M380 345 H495 M380 400 H495" stroke="#444" stroke-width="8" fill="none"/><rect x="470" y="38" width="65" height="90" fill="#555"/><path d="M437 35 V470" stroke="#666" stroke-width="5" fill="none" stroke-dasharray="90 18 14 18"/><path d="M930 35 V128 H1120 V35 M965 128 V400 L1025 455 L1085 400 V128 M965 322 H1085 M965 345 H1085 M965 400 H1085" stroke="#444" stroke-width="8" fill="none"/><rect x="1060" y="38" width="60" height="90" fill="#555"/><path d="M1025 35 V470" stroke="#666" stroke-width="5" fill="none" stroke-dasharray="90 18 14 18"/><circle cx="728" cy="350" r="82" stroke="#444" stroke-width="8" fill="none"/><path d="M728 35 V975 M0 350 H1800" stroke="#666" stroke-width="5" fill="none" stroke-dasharray="90 18 14 18"/><path d="M510 60 L715 335" stroke="#333" stroke-width="8" fill="none"/><path d="M715 335 L682 312 L703 297 Z" fill="#111"/><circle cx="1210" cy="348" r="22" stroke="#222" stroke-width="11" fill="#fff"/><circle cx="360" cy="525" r="40" stroke="#444" stroke-width="8" fill="none"/><path d="M310 565 V700 Q290 720 270 740 V975 M410 565 V700 Q440 720 470 740 V975 M265 565 H310 M410 565 H460 M335 700 Q360 660 395 700 V800 H335 Z M330 820 H400 V880 H330 Z M360 565 V700" stroke="#444" stroke-width="8" fill="none"/><rect x="265" y="885" width="70" height="90" fill="#333"/><rect x="410" y="885" width="62" height="90" fill="#444"/><path d="M280 860 L330 905 M270 800 L310 830" stroke="#111" stroke-width="14"/><circle cx="425" cy="620" r="10" stroke="#444" stroke-width="6" fill="none"/><circle cx="460" cy="745" r="10" stroke="#444" stroke-width="6" fill="none"/><path d="M1040 520 Q1100 450 1160 520 V780 H1040 Z M1020 570 V660 Q1000 690 985 700 L1010 740 V790 L1040 800 M1180 570 V660 Q1200 690 1215 700 L1190 740 V790 L1160 800 M1040 800 V880 H1160 V800 M1065 820 H1135 V870 H1065 Z M1000 880 V975 M1200 880 V975" stroke="#444" stroke-width="8" fill="none"/><path d="M1100 470 V975" stroke="#666" stroke-width="5" fill="none" stroke-dasharray="90 18 14 18"/><rect x="1000" y="890" width="70" height="85" fill="#3a3a3a"/><rect x="1130" y="890" width="72" height="85" fill="#3a3a3a"/><circle cx="1040" cy="620" r="10" stroke="#444" stroke-width="6" fill="none"/><circle cx="1160" cy="620" r="10" stroke="#444" stroke-width="6" fill="none"/><circle cx="1010" cy="745" r="10" stroke="#444" stroke-width="6" fill="none"/><circle cx="1192" cy="745" r="10" stroke="#444" stroke-width="6" fill="none"/><path d="M1215 35 V250 M1275 650 V975 M1215 650 V975 M1190 430 Q1200 500 1230 520 V650 H1290 M1230 260 H1370 M1230 300 H1370 M1230 400 H1370 M1215 250 Q1200 280 1195 300 M1280 40 V120 M1270 175 H1340 V230" stroke="#777" stroke-width="6" fill="none"/><path d="M1370 260 H1750 V432 H1370 Z M1560 230 H1640 V455 H1560 Z M1400 300 L1430 280 H1690 L1720 300 V395 L1690 418 H1430 L1400 395 Z M1690 280 V418" stroke="#333" stroke-width="9" fill="none"/><path d="M1400 275 H1720 V420 H1400 Z" stroke="#444" stroke-width="9" fill="none"/><path d="M1440 320 H1680 M1440 345 H1680 M1440 370 H1680 M1440 395 H1680 M1650 300 L1700 400 M1670 300 L1715 390" stroke="#777" stroke-width="6" fill="none"/><path d="M1300 480 Q1300 460 1330 460 H1370 M1310 500 H1530 Q1560 500 1560 530 V650 H1290 M1330 500 V530 H1500 M1345 530 V650 M1400 480 V690 M1450 530 V650 M1500 530 V650" stroke="#444" stroke-width="8" fill="none"/><path d="M1290 480 L1300 520 L1285 560 L1300 600 L1288 650" stroke="#777" stroke-width="6" fill="none"/><rect x="1820" y="45" width="125" height="125" fill="#fff" stroke="#888" stroke-width="9"/><rect x="1800" y="190" width="130" height="120" fill="#fff" stroke="#888" stroke-width="9"/><rect x="1800" y="435" width="130" height="130" fill="#fff" stroke="#888" stroke-width="9"/><path d="M1820 110 L1600 235" stroke="#333" stroke-width="8" fill="none"/><path d="M1600 235 L1627 205 L1639 228 Z" fill="#111"/><path d="M1800 255 L1700 275" stroke="#333" stroke-width="8" fill="none"/><path d="M1700 275 L1727 259 L1731 279 Z" fill="#111"/><path d="M1800 485 L1460 440" stroke="#333" stroke-width="8" fill="none"/><path d="M1460 440 L1499 432 L1496 458 Z" fill="#111"/><path d="M1290 35 L1140 250" stroke="#333" stroke-width="8" fill="none"/><path d="M1140 250 L1151 211 L1172 226 Z" fill="#111"/><path d="M1370 60 L1225 305" stroke="#333" stroke-width="8" fill="none"/><path d="M1225 305 L1233 266 L1256 279 Z" fill="#111"/><path d="M1540 50 L1275 340" stroke="#333" stroke-width="8" fill="none"/><path d="M1275 340 L1291 303 L1310 321 Z" fill="#111"/><path d="M1700 50 L1445 290" stroke="#333" stroke-width="8" fill="none"/><path d="M1445 290 L1464 254 L1482 273 Z" fill="#111"/><path d="M1370 60 H1480 M1540 50 H1630 M1700 50 H1800" stroke="#777" stroke-width="6" fill="none"/><rect x="1250" y="-30" width="232" height="48" fill="#fff" stroke="#888" stroke-width="8"/><path d="M-74 382 L318 519" stroke="#333" stroke-width="8" fill="none"/><path d="M318 519 L278 519 L286 494 Z" fill="#111"/><path d="M-44 729 L299 623" stroke="#333" stroke-width="8" fill="none"/><path d="M299 623 L267 647 L259 622 Z" fill="#111"/><path d="M-44 833 L255 748" stroke="#333" stroke-width="8" fill="none"/><path d="M255 748 L222 771 L215 746 Z" fill="#111"/><path d="M-64 922 L279 784" stroke="#333" stroke-width="8" fill="none"/><path d="M279 784 L256 807 L246 783 Z" fill="#111"/><path d="M-30 975 L295 812" stroke="#333" stroke-width="8" fill="none"/><path d="M295 812 L274 837 L262 814 Z" fill="#111"/><path d="M70 975 L275 855" stroke="#333" stroke-width="8" fill="none"/><path d="M275 855 L256 881 L243 859 Z" fill="#111"/><path d="M150 975 L280 890 M210 975 L295 915" stroke="#777" stroke-width="6" fill="none"/></svg>
<span class="t" style="left:1090.5px;top:164px;font-size:8.5px;line-height:12px;color:#222;transform:scaleX(0.9817);">28</span>
<span class="t" style="left:1090.8px;top:179px;font-size:8.5px;line-height:12px;color:#222;transform:scaleX(0.9817);">5</span>
<span class="t" style="left:1091.4px;top:206px;font-size:8.5px;line-height:12px;color:#222;transform:scaleX(0.9817);">4</span>
<svg style="left:670px;top:260px" width="70" height="80" viewBox="0 0 878 1004"><rect x="230" y="555" width="182" height="140" fill="#fff" stroke="#888" stroke-width="10"/><rect x="230" y="695" width="182" height="138" fill="#fff" stroke="#888" stroke-width="10"/><path d="M405 645 L655 715 M405 752 L650 782" stroke="#333" stroke-width="10" fill="none"/><path d="M660 718 L612 722 L622 690 Z M655 783 L600 795 L602 765 Z" fill="#111"/><rect x="655" y="645" width="30" height="275" fill="#fff" stroke="#666" stroke-width="8"/></svg>
<span class="t" style="left:690.1px;top:305px;font-size:8.6px;line-height:12px;color:#222;transform:scaleX(0.9817);">19</span>
<span class="t" style="left:690.1px;top:315px;font-size:8.6px;line-height:12px;color:#222;transform:scaleX(0.9817);">29</span>
</div></div>
<svg style="left:0;top:0" width="2048" height="1004"><rect x="861.7" y="48.4" width="1.7" height="20.2" fill="#b9b9b9"/><rect x="902.9000000000001" y="48.4" width="1.7" height="20.2" fill="#b9b9b9"/><rect x="966.9000000000001" y="48.4" width="1.7" height="20.2" fill="#b9b9b9"/><rect x="1061.5" y="48.4" width="1.7" height="20.2" fill="#b9b9b9"/><rect x="1127.0" y="48.4" width="1.7" height="20.2" fill="#b9b9b9"/><rect x="21" y="137.1" width="502.6" height="1.9" fill="#999"/><rect x="522.15" y="137.1" width="1.25" height="824.5" fill="#8f8f8f"/><rect x="21" y="960.6" width="502.4" height="1.2" fill="#999"/><rect x="526.6" y="137.1" width="751" height="1.8" fill="#8b8b8b"/><rect x="526.6" y="137.1" width="1.6" height="413.2" fill="#8b8b8b"/><rect x="1275.9" y="137.1" width="1.7" height="413.2" fill="#8b8b8b"/><rect x="526.6" y="548.8" width="751" height="1.6" fill="#8b8b8b"/><rect x="528" y="161.2" width="748" height="1.4" fill="#8b8b8b"/><rect x="1281" y="137.1" width="747" height="1.8" fill="#8b8b8b"/><rect x="1281" y="137.1" width="1.7" height="413" fill="#8b8b8b"/><rect x="1281" y="548.8" width="747" height="1.6" fill="#8b8b8b"/><rect x="526.6" y="553.8" width="1501.4" height="1.7" fill="#8b8b8b"/><rect x="526.6" y="553.8" width="1.6" height="408.2" fill="#8b8b8b"/><rect x="526.6" y="960.3" width="1501.4" height="1.7" fill="#8b8b8b"/></svg>
<div style="left:724.4px;top:264.3px;width:612.6999999999999px;height:510.49999999999994px;background:#f1c565;border:1px solid #d2ac55;"></div>
<div style="left:730.7px;top:288.7px;width:600.3px;height:480px;background:#fff;"></div>
<svg style="left:733px;top:269.7px" width="10" height="12"><path d="M0.5 0.5 H6.5 L9.5 3.5 V11.5 H0.5 Z" fill="#fbfbf6" stroke="#c9c2a4"/><path d="M2.5 4 H7 M2.5 5.8 H7 M2.5 7.6 H7 M2.5 9.4 H7" stroke="#6aa0c8" stroke-width="1"/></svg>
<span class="t" style="left:941.2px;top:270px;font-size:11.6px;line-height:14px;color:#4c3f1c;transform:scaleX(1.0599);">Print Drawing -- Webpage Dialog</span>
<div style="left:1307px;top:264.7px;width:25px;height:16.2px;background:#d5493f;"></div>
<svg style="left:1315.7px;top:268.9px" width="8" height="8"><path d="M0.8 0.8 L7.2 7.2 M7.2 0.8 L0.8 7.2" stroke="#fff" stroke-width="1.5"/></svg>
<div style="left:730.7px;top:288.7px;width:587px;height:456.6px;overflow:hidden;"><div style="left:-730.7px;top:-288.7px;width:2048px;height:1004px;">
<span class="t" style="left:936.5px;top:297px;font-size:9px;line-height:12px;color:#222;transform:scaleX(0.9576);white-space:pre;">25A CX1000  \ P25G-E1-1  \ PILOT VALVE  \</span>
<div style="left:738.8px;top:312.8px;width:570px;height:1px;background:#9a9a9a;"></div>
<span class="t" style="left:741px;top:331px;font-size:14.5px;line-height:18px;color:#111;">081: VALVE;PILOT (OPTION)</span>
<span class="t" style="left:741px;top:352px;font-size:9px;line-height:12px;color:#222;transform:scaleX(0.922);">Applicable Model:</span>
<span class="t" style="left:741px;top:365px;font-size:9px;line-height:12px;color:#222;transform:scaleX(0.9156);">Model Symbol:</span>
<span class="t" style="left:741px;top:379px;font-size:9px;line-height:12px;color:#222;transform:scaleX(0.9263);">Applicable S/N:</span>
<span class="t" style="left:810.2px;top:379px;font-size:9px;line-height:12px;color:#222;transform:scaleX(0.9851);">000601 -</span>
<div style="left:738.8px;top:397.4px;width:570px;height:1px;background:#9a9a9a;"></div>
<div style="left:738.8px;top:413px;width:570px;height:26px;background:#eeeeee;border-bottom:1px solid #cfcfcf;"></div>
<div style="left:765.7px;top:413px;width:1px;height:26px;background:#dadada;"></div>
<div style="left:838.0px;top:413px;width:1px;height:26px;background:#dadada;"></div>
<div style="left:863.9px;top:413px;width:1px;height:26px;background:#dadada;"></div>
<div style="left:952.5px;top:413px;width:1px;height:26px;background:#dadada;"></div>
<div style="left:1025.0px;top:413px;width:1px;height:26px;background:#dadada;"></div>
<div style="left:1103.2px;top:413px;width:1px;height:26px;background:#dadada;"></div>
<div style="left:1135.0px;top:413px;width:1px;height:26px;background:#dadada;"></div>
<div style="left:1215.7px;top:413px;width:1px;height:26px;background:#dadada;"></div>
<div style="left:1308.3px;top:413px;width:1px;height:26px;background:#dadada;"></div>
<span class="t" style="left:741px;top:421px;font-size:9px;line-height:12px;color:#222;transform:scaleX(0.9528);">Code</span>
<span class="t" style="left:768.3px;top:421px;font-size:9px;line-height:12px;color:#222;transform:scaleX(0.9693);">Part No.</span>
<span class="t" style="left:840.5px;top:421px;font-size:9px;line-height:12px;color:#222;transform:scaleX(1.0357);">Qty</span>
<span class="t" style="left:866.6px;top:421px;font-size:9px;line-height:12px;color:#222;transform:scaleX(0.9513);">Part name</span>
<span class="t" style="left:955.5px;top:421px;font-size:9px;line-height:12px;color:#222;transform:scaleX(0.9418);">Service code</span>
<span class="t" style="left:1028px;top:421px;font-size:9px;line-height:12px;color:#222;transform:scaleX(0.9446);">Applied S/N range</span>
<span class="t" style="left:1106.3px;top:421px;font-size:9px;line-height:12px;color:#222;transform:scaleX(0.9665);">ICA</span>
<span class="t" style="left:1138.5px;top:421px;font-size:9px;line-height:12px;color:#222;transform:scaleX(0.9785);">Alternate Part No.</span>
<span class="t" style="left:1219px;top:415px;font-size:9px;line-height:12px;color:#222;transform:scaleX(1.0179);">Alternate part</span>
<span class="t" style="left:1219px;top:426px;font-size:9px;line-height:12px;color:#222;transform:scaleX(1.0151);">quantity</span>
<div style="left:738.8px;top:449.3px;width:570px;height:1px;background:#d5d5d5;"></div>
<span class="t" style="left:768.3px;top:439px;font-size:9.2px;line-height:12px;color:#222;transform:scaleX(0.9337);">4357306</span>
<span class="t" style="left:840.5px;top:439px;font-size:9.2px;line-height:12px;color:#222;transform:scaleX(0.9337);">1</span>
<span class="t" style="left:868.4px;top:439px;font-size:9.2px;line-height:12px;color:#222;transform:scaleX(0.902);">VALVE;PILOT</span>
<div style="left:738.8px;top:460.5px;width:570px;height:1px;background:#d5d5d5;"></div>
<span class="t" style="left:741px;top:450px;font-size:9.2px;line-height:12px;color:#222;transform:scaleX(0.9337);">1</span>
<span class="t" style="left:768.3px;top:450px;font-size:9.2px;line-height:12px;color:#222;transform:scaleX(0.9337);">0348002</span>
<span class="t" style="left:840.5px;top:450px;font-size:9.2px;line-height:12px;color:#222;transform:scaleX(0.9337);">4</span>
<span class="t" style="left:866.8px;top:450px;font-size:9.2px;line-height:12px;color:#222;letter-spacing:1.197px;">*</span>
<span class="t" style="left:873.3px;top:450px;font-size:9.2px;line-height:12px;color:#222;transform:scaleX(0.9039);">SHIM</span>
<div style="left:738.8px;top:471.7px;width:570px;height:1px;background:#d5d5d5;"></div>
<span class="t" style="left:741px;top:461px;font-size:9.2px;line-height:12px;color:#222;transform:scaleX(0.9337);">2</span>
<span class="t" style="left:768.3px;top:461px;font-size:9.2px;line-height:12px;color:#222;transform:scaleX(0.9337);">0348017</span>
<span class="t" style="left:840.5px;top:461px;font-size:9.2px;line-height:12px;color:#222;transform:scaleX(0.9337);">1</span>
<span class="t" style="left:866.8px;top:461px;font-size:9.2px;line-height:12px;color:#222;letter-spacing:1.197px;">*</span>
<span class="t" style="left:873.3px;top:461px;font-size:9.2px;line-height:12px;color:#222;transform:scaleX(0.8259);">COVER</span>
<div style="left:738.8px;top:482.9px;width:570px;height:1px;background:#d5d5d5;"></div>
<span class="t" style="left:741px;top:473px;font-size:9.2px;line-height:12px;color:#222;transform:scaleX(0.9337);">3</span>
<span class="t" style="left:768.3px;top:473px;font-size:9.2px;line-height:12px;color:#222;transform:scaleX(0.9337);">0250306</span>
<span class="t" style="left:840.5px;top:473px;font-size:9.2px;line-height:12px;color:#222;transform:scaleX(0.9337);">1</span>
<span class="t" style="left:866.8px;top:473px;font-size:9.2px;line-height:12px;color:#222;letter-spacing:1.197px;">*</span>
<span class="t" style="left:873.3px;top:473px;font-size:9.2px;line-height:12px;color:#222;transform:scaleX(0.9077);">PIN</span>
<div style="left:738.8px;top:494.1px;width:570px;height:1px;background:#d5d5d5;"></div>
<span class="t" style="left:741px;top:484px;font-size:9.2px;line-height:12px;color:#222;transform:scaleX(0.9337);">4</span>
<span class="t" style="left:768.3px;top:484px;font-size:9.2px;line-height:12px;color:#222;transform:scaleX(0.9337);">0348004</span>
<span class="t" style="left:840.5px;top:484px;font-size:9.2px;line-height:12px;color:#222;transform:scaleX(0.9337);">2</span>
<span class="t" style="left:866.8px;top:484px;font-size:9.2px;line-height:12px;color:#222;letter-spacing:1.197px;">*</span>
<span class="t" style="left:873.3px;top:484px;font-size:9.2px;line-height:12px;color:#222;transform:scaleX(0.8814);">GUIDE</span>
<div style="left:738.8px;top:505.3px;width:570px;height:1px;background:#d5d5d5;"></div>
<span class="t" style="left:741px;top:495px;font-size:9.2px;line-height:12px;color:#222;transform:scaleX(0.9337);">5</span>
<span class="t" style="left:768.3px;top:495px;font-size:9.2px;line-height:12px;color:#222;transform:scaleX(0.9337);">0348005</span>
<span class="t" style="left:840.5px;top:495px;font-size:9.2px;line-height:12px;color:#222;transform:scaleX(0.9337);">2</span>
<span class="t" style="left:866.8px;top:495px;font-size:9.2px;line-height:12px;color:#222;letter-spacing:1.197px;">*</span>
<span class="t" style="left:873.3px;top:495px;font-size:9.2px;line-height:12px;color:#222;transform:scaleX(0.8669);">SCREW;ADJUSTING</span>
<div style="left:738.8px;top:516.5px;width:570px;height:1px;background:#d5d5d5;"></div>
<span class="t" style="left:741px;top:506px;font-size:9.2px;line-height:12px;color:#222;transform:scaleX(0.9337);">6</span>
<span class="t" style="left:768.3px;top:506px;font-size:9.2px;line-height:12px;color:#222;transform:scaleX(0.9337);">0348006</span>
<span class="t" style="left:840.5px;top:506px;font-size:9.2px;line-height:12px;color:#222;transform:scaleX(0.9337);">2</span>
<span class="t" style="left:866.8px;top:506px;font-size:9.2px;line-height:12px;color:#222;letter-spacing:1.197px;">*</span>
<span class="t" style="left:873.3px;top:506px;font-size:9.2px;line-height:12px;color:#222;transform:scaleX(0.8667);">HOLDER;BALL</span>
<div style="left:738.8px;top:527.7px;width:570px;height:1px;background:#d5d5d5;"></div>
<span class="t" style="left:741px;top:517px;font-size:9.2px;line-height:12px;color:#222;transform:scaleX(0.9337);">7</span>
<span class="t" style="left:768.3px;top:517px;font-size:9.2px;line-height:12px;color:#222;transform:scaleX(0.9337);">0250307</span>
<span class="t" style="left:840.5px;top:517px;font-size:9.2px;line-height:12px;color:#222;transform:scaleX(0.9337);">4</span>
<span class="t" style="left:866.8px;top:517px;font-size:9.2px;line-height:12px;color:#222;letter-spacing:1.197px;">*</span>
<span class="t" style="left:873.3px;top:517px;font-size:9.2px;line-height:12px;color:#222;transform:scaleX(0.8151);">SLEEVE</span>
<div style="left:738.8px;top:538.9px;width:570px;height:1px;background:#d5d5d5;"></div>
<span class="t" style="left:741px;top:529px;font-size:9.2px;line-height:12px;color:#222;transform:scaleX(0.9337);">8</span>
<span class="t" style="left:768.3px;top:529px;font-size:9.2px;line-height:12px;color:#222;transform:scaleX(0.9337);">0250320</span>
<span class="t" style="left:840.5px;top:529px;font-size:9.2px;line-height:12px;color:#222;transform:scaleX(0.9337);">4</span>
<span class="t" style="left:866.8px;top:529px;font-size:9.2px;line-height:12px;color:#222;letter-spacing:1.197px;">*</span>
<span class="t" style="left:873.3px;top:529px;font-size:9.2px;line-height:12px;color:#222;transform:scaleX(0.8442);">PUSHER ASS&#x27;Y</span>
<div style="left:738.8px;top:550.1px;width:570px;height:1px;background:#d5d5d5;"></div>
<span class="t" style="left:741px;top:540px;font-size:9.2px;line-height:12px;color:#222;transform:scaleX(0.8911);">8A</span>
<span class="t" style="left:769.3px;top:540px;font-size:9.2px;line-height:12px;color:#222;transform:scaleX(1.1856);">+++++++</span>
<span class="t" style="left:840.5px;top:540px;font-size:9.2px;line-height:12px;color:#222;transform:scaleX(0.9337);">4</span>
<span class="t" style="left:866.8px;top:540px;font-size:9.2px;line-height:12px;color:#222;letter-spacing:1.197px;">*</span>
<span class="t" style="left:873.3px;top:540px;font-size:9.2px;line-height:12px;color:#222;transform:scaleX(0.8263);">PUSHER</span>
<span class="t" style="left:955px;top:540px;font-size:9.2px;line-height:12px;color:#222;transform:scaleX(0.8929);">D</span>
<div style="left:738.8px;top:561.3px;width:570px;height:1px;background:#d5d5d5;"></div>
<span class="t" style="left:741px;top:551px;font-size:9.2px;line-height:12px;color:#222;transform:scaleX(0.8825);">8B</span>
<span class="t" style="left:769.3px;top:551px;font-size:9.2px;line-height:12px;color:#222;transform:scaleX(1.1856);">+++++++</span>
<span class="t" style="left:840.5px;top:551px;font-size:9.2px;line-height:12px;color:#222;transform:scaleX(0.9337);">4</span>
<span class="t" style="left:866.8px;top:551px;font-size:9.2px;line-height:12px;color:#222;letter-spacing:1.197px;">*</span>
<span class="t" style="left:873.3px;top:551px;font-size:9.2px;line-height:12px;color:#222;transform:scaleX(0.8555);">BALL;STEEL</span>
<span class="t" style="left:955px;top:551px;font-size:9.2px;line-height:12px;color:#222;transform:scaleX(0.8929);">D</span>
<div style="left:738.8px;top:572.5px;width:570px;height:1px;background:#d5d5d5;"></div>
<span class="t" style="left:741px;top:562px;font-size:9.2px;line-height:12px;color:#222;transform:scaleX(0.9337);">9</span>
<span class="t" style="left:768.3px;top:562px;font-size:9.2px;line-height:12px;color:#222;transform:scaleX(0.9337);">0250309</span>
<span class="t" style="left:840.5px;top:562px;font-size:9.2px;line-height:12px;color:#222;transform:scaleX(0.9337);">4</span>
<span class="t" style="left:866.8px;top:562px;font-size:9.2px;line-height:12px;color:#222;letter-spacing:1.197px;">*</span>
<span class="t" style="left:873.3px;top:562px;font-size:9.2px;line-height:12px;color:#222;transform:scaleX(0.8787);">GUIDE;SPRING</span>
<div style="left:738.8px;top:583.7px;width:570px;height:1px;background:#d5d5d5;"></div>
<span class="t" style="left:741px;top:573px;font-size:9.2px;line-height:12px;color:#222;transform:scaleX(0.9337);">10</span>
<span class="t" style="left:768.3px;top:573px;font-size:9.2px;line-height:12px;color:#222;transform:scaleX(0.9337);">0250310</span>
<span class="t" style="left:840.5px;top:573px;font-size:9.2px;line-height:12px;color:#222;transform:scaleX(0.9337);">4</span>
<span class="t" style="left:866.8px;top:573px;font-size:9.2px;line-height:12px;color:#222;letter-spacing:1.197px;">*</span>
<span class="t" style="left:873.3px;top:573px;font-size:9.2px;line-height:12px;color:#222;transform:scaleX(0.8341);">SPOOL</span>
<div style="left:738.8px;top:594.9px;width:570px;height:1px;background:#d5d5d5;"></div>
<span class="t" style="left:741px;top:585px;font-size:9.2px;line-height:12px;color:#222;">11</span>
<span class="t" style="left:768.3px;top:585px;font-size:9.2px;line-height:12px;color:#222;transform:scaleX(0.9518);">0250311</span>
<span class="t" style="left:840.5px;top:585px;font-size:9.2px;line-height:12px;color:#222;transform:scaleX(0.9337);">4</span>
<span class="t" style="left:866.8px;top:585px;font-size:9.2px;line-height:12px;color:#222;letter-spacing:1.197px;">*</span>
<span class="t" style="left:873.3px;top:585px;font-size:9.2px;line-height:12px;color:#222;transform:scaleX(0.8651);">HOLDER;SPRING</span>
<div style="left:738.8px;top:606.1px;width:570px;height:1px;background:#d5d5d5;"></div>
<span class="t" style="left:741px;top:596px;font-size:9.2px;line-height:12px;color:#222;transform:scaleX(0.9337);">12</span>
<span class="t" style="left:768.3px;top:596px;font-size:9.2px;line-height:12px;color:#222;transform:scaleX(0.9337);">0250312</span>
<span class="t" style="left:840.5px;top:596px;font-size:9.2px;line-height:12px;color:#222;transform:scaleX(0.9337);">4</span>
<span class="t" style="left:866.8px;top:596px;font-size:9.2px;line-height:12px;color:#222;letter-spacing:1.197px;">*</span>
<span class="t" style="left:873.3px;top:596px;font-size:9.2px;line-height:12px;color:#222;transform:scaleX(0.8558);">WASHER</span>
<div style="left:738.8px;top:617.3px;width:570px;height:1px;background:#d5d5d5;"></div>
<span class="t" style="left:741px;top:607px;font-size:9.2px;line-height:12px;color:#222;transform:scaleX(0.9337);">13</span>
<span class="t" style="left:768.3px;top:607px;font-size:9.2px;line-height:12px;color:#222;transform:scaleX(0.9337);">0250313</span>
<span class="t" style="left:840.5px;top:607px;font-size:9.2px;line-height:12px;color:#222;transform:scaleX(0.9337);">4</span>
<span class="t" style="left:866.8px;top:607px;font-size:9.2px;line-height:12px;color:#222;letter-spacing:1.197px;">*</span>
<span class="t" style="left:873.3px;top:607px;font-size:9.2px;line-height:12px;color:#222;transform:scaleX(0.8523);">SPRING</span>
<div style="left:738.8px;top:628.5px;width:570px;height:1px;background:#d5d5d5;"></div>
<span class="t" style="left:741px;top:618px;font-size:9.2px;line-height:12px;color:#222;transform:scaleX(0.9337);">14</span>
<span class="t" style="left:768.3px;top:618px;font-size:9.2px;line-height:12px;color:#222;transform:scaleX(0.9518);">0348011</span>
<span class="t" style="left:840.5px;top:618px;font-size:9.2px;line-height:12px;color:#222;transform:scaleX(0.9337);">2</span>
<span class="t" style="left:866.8px;top:618px;font-size:9.2px;line-height:12px;color:#222;letter-spacing:1.197px;">*</span>
<span class="t" style="left:873.3px;top:618px;font-size:9.2px;line-height:12px;color:#222;transform:scaleX(0.8523);">SPRING</span>
<div style="left:738.8px;top:639.7px;width:570px;height:1px;background:#d5d5d5;"></div>
<span class="t" style="left:741px;top:629px;font-size:9.2px;line-height:12px;color:#222;transform:scaleX(0.9337);">15</span>
<span class="t" style="left:768.3px;top:629px;font-size:9.2px;line-height:12px;color:#222;transform:scaleX(0.9337);">0250304</span>
<span class="t" style="left:840.5px;top:629px;font-size:9.2px;line-height:12px;color:#222;transform:scaleX(0.9337);">4</span>
<span class="t" style="left:866.8px;top:629px;font-size:9.2px;line-height:12px;color:#222;letter-spacing:1.197px;">*</span>
<span class="t" style="left:873.3px;top:629px;font-size:9.2px;line-height:12px;color:#222;transform:scaleX(0.8523);">SPRING</span>
<div style="left:738.8px;top:650.9px;width:570px;height:1px;background:#d5d5d5;"></div>
<span class="t" style="left:741px;top:641px;font-size:9.2px;line-height:12px;color:#222;transform:scaleX(0.9337);">16</span>
<span class="t" style="left:768.3px;top:641px;font-size:9.2px;line-height:12px;color:#222;transform:scaleX(0.9337);">0250402</span>
<span class="t" style="left:840.5px;top:641px;font-size:9.2px;line-height:12px;color:#222;transform:scaleX(0.9337);">1</span>
<span class="t" style="left:866.8px;top:641px;font-size:9.2px;line-height:12px;color:#222;letter-spacing:1.197px;">*</span>
<span class="t" style="left:873.3px;top:641px;font-size:9.2px;line-height:12px;color:#222;transform:scaleX(0.8769);">HOUSING</span>
<div style="left:738.8px;top:662.1px;width:570px;height:1px;background:#d5d5d5;"></div>
<span class="t" style="left:741px;top:652px;font-size:9.2px;line-height:12px;color:#222;transform:scaleX(0.9337);">17</span>
<span class="t" style="left:768.3px;top:652px;font-size:9.2px;line-height:12px;color:#222;transform:scaleX(0.9337);">0817001</span>
<span class="t" style="left:840.5px;top:652px;font-size:9.2px;line-height:12px;color:#222;transform:scaleX(0.9337);">1</span>
<span class="t" style="left:866.8px;top:652px;font-size:9.2px;line-height:12px;color:#222;letter-spacing:1.197px;">*</span>
<span class="t" style="left:873.3px;top:652px;font-size:9.2px;line-height:12px;color:#222;transform:scaleX(0.8561);">BODY</span>
<div style="left:738.8px;top:673.3px;width:570px;height:1px;background:#d5d5d5;"></div>
<span class="t" style="left:741px;top:663px;font-size:9.2px;line-height:12px;color:#222;transform:scaleX(0.9337);">18</span>
<span class="t" style="left:768.3px;top:663px;font-size:9.2px;line-height:12px;color:#222;transform:scaleX(0.9337);">0817002</span>
<span class="t" style="left:840.5px;top:663px;font-size:9.2px;line-height:12px;color:#222;transform:scaleX(0.9337);">2</span>
<span class="t" style="left:866.8px;top:663px;font-size:9.2px;line-height:12px;color:#222;letter-spacing:1.197px;">*</span>
<span class="t" style="left:873.3px;top:663px;font-size:9.2px;line-height:12px;color:#222;transform:scaleX(0.844);">CAM</span>
<div style="left:738.8px;top:684.5px;width:570px;height:1px;background:#d5d5d5;"></div>
<span class="t" style="left:741px;top:674px;font-size:9.2px;line-height:12px;color:#222;transform:scaleX(0.9337);">19</span>
<span class="t" style="left:769.3px;top:674px;font-size:9.2px;line-height:12px;color:#222;transform:scaleX(1.1856);">+++++++</span>
<span class="t" style="left:840.5px;top:674px;font-size:9.2px;line-height:12px;color:#222;transform:scaleX(0.9337);">1</span>
<span class="t" style="left:866.8px;top:674px;font-size:9.2px;line-height:12px;color:#222;letter-spacing:1.197px;">*</span>
<span class="t" style="left:873.3px;top:674px;font-size:9.2px;line-height:12px;color:#222;transform:scaleX(0.8667);">NAME-PLATE</span>
<span class="t" style="left:955px;top:674px;font-size:9.2px;line-height:12px;color:#222;transform:scaleX(0.8929);">D</span>
<div style="left:738.8px;top:695.7px;width:570px;height:1px;background:#d5d5d5;"></div>
<span class="t" style="left:741px;top:685px;font-size:9.2px;line-height:12px;color:#222;transform:scaleX(0.9337);">21</span>
<span class="t" style="left:768.3px;top:685px;font-size:9.2px;line-height:12px;color:#222;transform:scaleX(0.9337);">0228910</span>
<span class="t" style="left:840.5px;top:685px;font-size:9.2px;line-height:12px;color:#222;transform:scaleX(0.9337);">4</span>
<span class="t" style="left:866.8px;top:685px;font-size:9.2px;line-height:12px;color:#222;letter-spacing:1.197px;">*</span>
<span class="t" style="left:873.3px;top:685px;font-size:9.2px;line-height:12px;color:#222;transform:scaleX(0.8916);">BOLT</span>
<div style="left:738.8px;top:706.9px;width:570px;height:1px;background:#d5d5d5;"></div>
<span class="t" style="left:741px;top:697px;font-size:9.2px;line-height:12px;color:#222;transform:scaleX(0.9337);">22</span>
<span class="t" style="left:768.3px;top:697px;font-size:9.2px;line-height:12px;color:#222;transform:scaleX(0.923);">M340408</span>
<span class="t" style="left:840.5px;top:697px;font-size:9.2px;line-height:12px;color:#222;transform:scaleX(0.9337);">4</span>
<span class="t" style="left:866.8px;top:697px;font-size:9.2px;line-height:12px;color:#222;letter-spacing:1.197px;">*</span>
<span class="t" style="left:873.3px;top:697px;font-size:9.2px;line-height:12px;color:#222;transform:scaleX(0.8835);">BOLT;SOCKET</span>
<div style="left:738.8px;top:718.1px;width:570px;height:1px;background:#d5d5d5;"></div>
<span class="t" style="left:741px;top:708px;font-size:9.2px;line-height:12px;color:#222;transform:scaleX(0.9337);">23</span>
<span class="t" style="left:768.3px;top:708px;font-size:9.2px;line-height:12px;color:#222;transform:scaleX(0.923);">M341071</span>
<span class="t" style="left:840.5px;top:708px;font-size:9.2px;line-height:12px;color:#222;transform:scaleX(0.9337);">2</span>
<span class="t" style="left:866.8px;top:708px;font-size:9.2px;line-height:12px;color:#222;letter-spacing:1.197px;">*</span>
<span class="t" style="left:873.3px;top:708px;font-size:9.2px;line-height:12px;color:#222;transform:scaleX(0.8835);">BOLT;SOCKET</span>
<div style="left:738.8px;top:729.3px;width:570px;height:1px;background:#d5d5d5;"></div>
<span class="t" style="left:741px;top:719px;font-size:9.2px;line-height:12px;color:#222;transform:scaleX(0.9337);">24</span>
<span class="t" style="left:768.3px;top:719px;font-size:9.2px;line-height:12px;color:#222;transform:scaleX(0.923);">M341220</span>
<span class="t" style="left:840.5px;top:719px;font-size:9.2px;line-height:12px;color:#222;transform:scaleX(0.9337);">4</span>
<span class="t" style="left:866.8px;top:719px;font-size:9.2px;line-height:12px;color:#222;letter-spacing:1.197px;">*</span>
<span class="t" style="left:873.3px;top:719px;font-size:9.2px;line-height:12px;color:#222;transform:scaleX(0.8835);">BOLT;SOCKET</span>
<div style="left:738.8px;top:740.5px;width:570px;height:1px;background:#d5d5d5;"></div>
<span class="t" style="left:741px;top:730px;font-size:9.2px;line-height:12px;color:#222;transform:scaleX(0.9337);">25</span>
<span class="t" style="left:768.3px;top:730px;font-size:9.2px;line-height:12px;color:#222;transform:scaleX(0.923);">M430608</span>
<span class="t" style="left:840.5px;top:730px;font-size:9.2px;line-height:12px;color:#222;transform:scaleX(0.9337);">2</span>
<span class="t" style="left:866.8px;top:730px;font-size:9.2px;line-height:12px;color:#222;letter-spacing:1.197px;">*</span>
<span class="t" style="left:873.3px;top:730px;font-size:9.2px;line-height:12px;color:#222;transform:scaleX(0.8284);">SCREW</span>
<div style="left:738.8px;top:751.7px;width:570px;height:1px;background:#d5d5d5;"></div>
<span class="t" style="left:741px;top:741px;font-size:9.2px;line-height:12px;color:#222;transform:scaleX(0.9337);">26</span>
<span class="t" style="left:768.3px;top:741px;font-size:9.2px;line-height:12px;color:#222;transform:scaleX(0.9337);">0250308</span>
<span class="t" style="left:840.5px;top:741px;font-size:9.2px;line-height:12px;color:#222;transform:scaleX(0.9337);">1</span>
<span class="t" style="left:866.8px;top:741px;font-size:9.2px;line-height:12px;color:#222;letter-spacing:1.197px;">*</span>
<span class="t" style="left:873.3px;top:741px;font-size:9.2px;line-height:12px;color:#222;transform:scaleX(0.8284);">SCREW</span>
</div></div>
<div style="left:1318px;top:288.7px;width:13px;height:456.6px;background:#f0f0f0;"></div>
<div style="left:1318.3px;top:316.2px;width:12.2px;height:147px;background:#cdcdcd;"></div>
<svg style="left:1319px;top:301.5px" width="11" height="7"><path d="M0.8 6 L5.5 1.3 L10.2 6" fill="none" stroke="#444" stroke-width="1.7"/></svg>
<svg style="left:1319px;top:723.5px" width="11" height="7"><path d="M0.8 1 L5.5 5.7 L10.2 1" fill="none" stroke="#444" stroke-width="1.7"/></svg>
<div style="left:730.7px;top:745.3px;width:600.3px;height:23.4px;background:#444444;"></div>
<div style="left:959.5px;top:753px;width:9.3px;height:9.3px;background:#fff;border:1px solid #555;"></div>
<svg style="left:960.5px;top:754px" width="8" height="8"><path d="M1.2 3.8 L3 6 L6.6 1.2" fill="none" stroke="#111" stroke-width="1.4"/></svg>
<span class="t" style="left:970.8px;top:752px;font-size:9px;line-height:12px;color:#fff;transform:scaleX(0.9597);text-shadow:1px 1px 0 #222;">Fit Image</span>
<div style="left:1014.5px;top:753px;width:9.3px;height:9.3px;background:#fff;border:1px solid #555;"></div>
<svg style="left:1015.5px;top:754px" width="8" height="8"><path d="M1.2 3.8 L3 6 L6.6 1.2" fill="none" stroke="#111" stroke-width="1.4"/></svg>
<span class="t" style="left:1026px;top:752px;font-size:9px;line-height:12px;color:#fff;transform:scaleX(0.9613);text-shadow:1px 1px 0 #222;">Show illustration</span>
<div style="left:1096.3px;top:753px;width:9.3px;height:9.3px;background:#fff;border:1px solid #555;"></div>
<svg style="left:1097.3px;top:754px" width="8" height="8"><path d="M1.2 3.8 L3 6 L6.6 1.2" fill="none" stroke="#111" stroke-width="1.4"/></svg>
<span class="t" style="left:1108px;top:752px;font-size:9px;line-height:12px;color:#fff;transform:scaleX(0.9008);text-shadow:1px 1px 0 #222;">Show BOM</span>
<div style="left:1152px;top:749px;width:55.59999999999991px;height:15px;background:#f1f1f1;border:1px solid #8a8a8a;box-shadow:inset 0 0 0 1px #fff;"></div>
<span class="t" style="left:1169.5px;top:751px;font-size:9px;line-height:12px;color:#222;transform:scaleX(0.9757);">Copy</span>
<div style="left:1211.6px;top:749px;width:55.40000000000009px;height:15px;background:#f1f1f1;border:1px solid #8a8a8a;box-shadow:inset 0 0 0 1px #fff;"></div>
<span class="t" style="left:1230.0px;top:751px;font-size:9px;line-height:12px;color:#222;">Print</span>
<div style="left:1270.8px;top:749px;width:55.700000000000045px;height:15px;background:#f1f1f1;border:1px solid #8a8a8a;box-shadow:inset 0 0 0 1px #fff;"></div>
<span class="t" style="left:1287.9px;top:751px;font-size:9px;line-height:12px;color:#222;transform:scaleX(0.9344);">Close</span>
</body></html>
